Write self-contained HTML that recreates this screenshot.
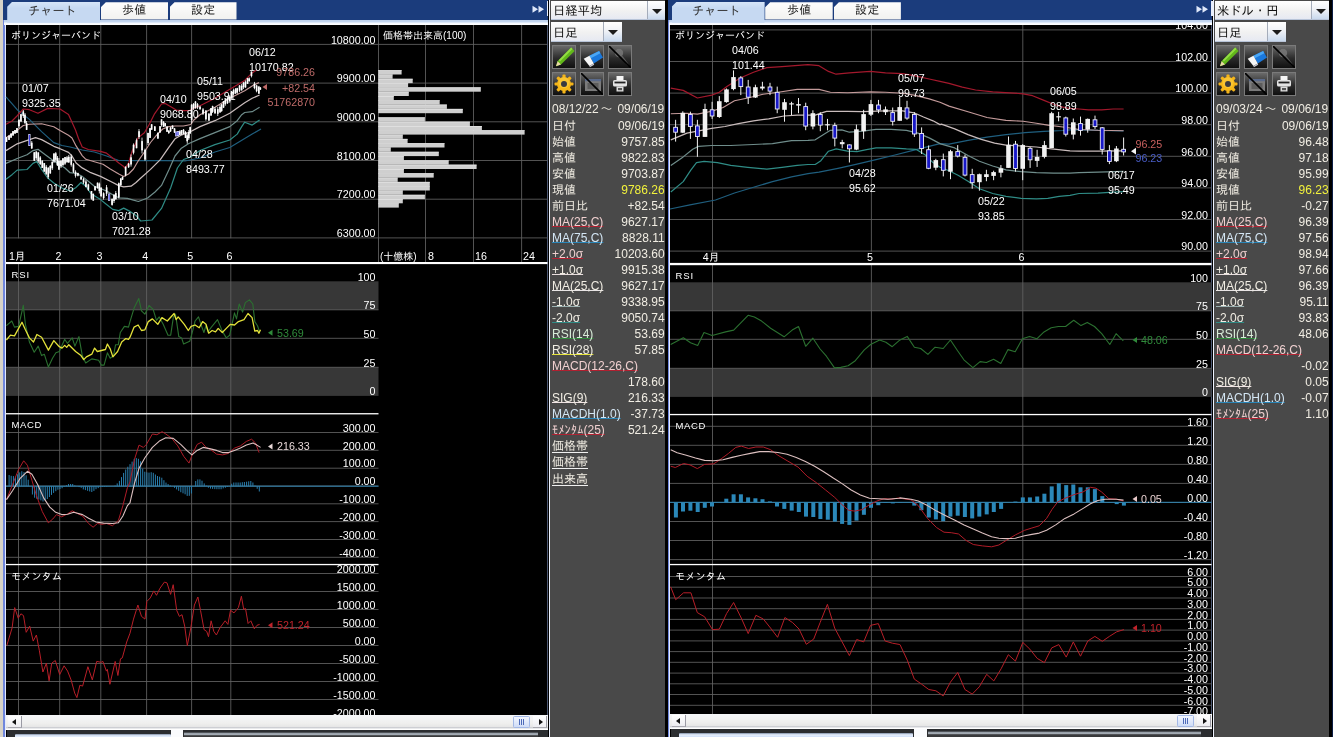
<!DOCTYPE html>
<html lang="ja"><head><meta charset="utf-8"><title>チャート</title>
<style>
html,body{margin:0;padding:0;background:#000;}
#root{position:relative;width:1333px;height:737px;overflow:hidden;background:#000;font-family:"Liberation Sans", "IPAGothic", "Noto Sans CJK JP", sans-serif;}
#root div,#root span{box-sizing:border-box}
.edge{position:absolute;top:0;height:737px}
.bar{position:absolute;top:0;height:20.4px;background:#1b3c7c}
.strip{position:absolute;top:20px;height:5.2px;background:linear-gradient(#bccfeb 0,#c6d9f2 40%,#f4f8ff 60%,#ffffff 100%)}
.tab{position:absolute;top:2.2px;height:17.4px;background:linear-gradient(#fdfdfd,#f1f1ef);text-align:center;font-size:12px;line-height:16px;color:#222;
  clip-path:polygon(5px 0,100% 0,100% 100%,0 100%,0 5px)}
.tab span{display:inline-block;letter-spacing:0.2px}
.tab.act{top:1.8px;height:21px;background:linear-gradient(#d6e5f8,#c6d9f2 30%);line-height:18px;color:#333;padding-right:3px}
.side{position:absolute;top:0;height:737px;background:#494949;}
.side .row,.dd span,.tab span{will-change:transform}
.dd{position:absolute;background:linear-gradient(#ffffff,#f1f1f1 55%,#e6e9f2);font-size:12px;color:#111;line-height:18px;border-bottom:1px solid #b8c4d8}
.ddt{position:absolute;left:1.5px;top:1.3px;white-space:nowrap;font-size:12.3px}
.ddb{position:absolute;right:0;top:0;bottom:0;border-left:1px solid #a4acba;background:linear-gradient(#ffffff,#eef1f6 50%,#c9d9ee)}
.ddb i{position:absolute;left:50%;top:8px;margin-left:-5px;border-left:5px solid transparent;border-right:5px solid transparent;border-top:5px solid #1c1c1c;width:0;height:0}
.ib{position:absolute;width:24px;height:24px;border:1px solid #7a7a7a;background:linear-gradient(#6a6a6a,#2c2c2c 55%,#101010);overflow:hidden}
.ib svg{position:absolute;left:0;top:0}
.row{position:absolute;left:2.3px;right:0.1px;height:16px;font-size:12px;line-height:15px;color:#f1ede3;white-space:nowrap}
.row .l{position:absolute;left:0;top:0;height:14.6px;line-height:15px}
.row .v{position:absolute;right:0;top:0}
.til{display:inline-block;width:15.4px;text-align:center;font-size:12px}
.hk{letter-spacing:0.3px;font-size:12px}
.sb{position:absolute;height:15.1px;background:linear-gradient(#f6f7f9,#efefee 55%,#e6e6e6 80%,#b9bcc4 86%,#ffffff 92%);}
.sbb{position:absolute;top:1.2px;width:14px;height:11.6px;background:linear-gradient(#ffffff,#ececf0);border-right:1px solid #9a9aa4;border-bottom:1px solid #a8a8b0}
.sbb i{position:absolute;top:2.6px;width:0;height:0;border-top:3.2px solid transparent;border-bottom:3.2px solid transparent}
.al{left:4px;border-right:4px solid #111}
.ar{left:6px;border-left:4px solid #111}
.sbt{position:absolute;top:1.2px;width:16.8px;height:11.6px;background:linear-gradient(#f2f6ff,#cfdcf6);border:1px solid #a3b8e6;border-radius:1.5px}
.sbt b{position:absolute;top:2.4px;width:1px;height:5.4px;background:#4d6ab8}
.sbt b:nth-child(1){left:4.6px}.sbt b:nth-child(2){left:6.8px}.sbt b:nth-child(3){left:9px}
.bs{position:absolute;height:9px;background:#2b2d30}
</style></head>
<body>
<div id="root">
<div class="edge" style="left:0;width:3.2px;background:#d7d3c8"></div>
<div class="edge" style="left:3.2px;width:1.4px;background:#6f86dc"></div>
<div class="edge" style="left:4.6px;width:1.6px;background:#e2e9fc"></div>
<div class="edge" style="left:547.3px;width:1.2px;background:#9bb2ea"></div>
<div class="edge" style="left:548.5px;width:1.7px;background:#eef3ff"></div>
<div class="edge" style="left:667.6px;width:1.2px;background:#6f86dc"></div>
<div class="edge" style="left:668.8px;width:1.4px;background:#e2e9fc"></div>
<div class="edge" style="left:1211.3px;width:1.2px;background:#9bb2ea"></div>
<div class="edge" style="left:1212.5px;width:1.7px;background:#eef3ff"></div>
<svg width="1333" height="737" viewBox="0 0 1333 737" style="position:absolute;left:0;top:0;will-change:transform" font-family='"Liberation Sans", "IPAGothic", "Noto Sans CJK JP", sans-serif'>
<rect x="6" y="25" width="541.5" height="690" fill="#000" />
<rect x="670" y="25" width="541.5" height="690" fill="#000" />
<rect x="6" y="281.3" width="372.5" height="28.5" fill="#373737" />
<rect x="6" y="367.3" width="372.5" height="28.6" fill="#373737" />
<rect x="670" y="282.3" width="541.5" height="28.5" fill="#373737" />
<rect x="670" y="368.3" width="541.5" height="28.6" fill="#373737" />
<line x1="18.5" y1="25" x2="18.5" y2="238.3" stroke="#626262" stroke-width="0.85"/>
<line x1="18.5" y1="264" x2="18.5" y2="715" stroke="#626262" stroke-width="0.85"/>
<line x1="59.7" y1="25" x2="59.7" y2="238.3" stroke="#626262" stroke-width="0.85"/>
<line x1="59.7" y1="264" x2="59.7" y2="715" stroke="#626262" stroke-width="0.85"/>
<line x1="100.8" y1="25" x2="100.8" y2="238.3" stroke="#626262" stroke-width="0.85"/>
<line x1="100.8" y1="264" x2="100.8" y2="715" stroke="#626262" stroke-width="0.85"/>
<line x1="146.6" y1="25" x2="146.6" y2="238.3" stroke="#626262" stroke-width="0.85"/>
<line x1="146.6" y1="264" x2="146.6" y2="715" stroke="#626262" stroke-width="0.85"/>
<line x1="191.6" y1="25" x2="191.6" y2="238.3" stroke="#626262" stroke-width="0.85"/>
<line x1="191.6" y1="264" x2="191.6" y2="715" stroke="#626262" stroke-width="0.85"/>
<line x1="230.8" y1="25" x2="230.8" y2="238.3" stroke="#626262" stroke-width="0.85"/>
<line x1="230.8" y1="264" x2="230.8" y2="715" stroke="#626262" stroke-width="0.85"/>
<line x1="378.5" y1="25" x2="378.5" y2="262" stroke="#626262" stroke-width="0.85"/>
<line x1="425.5" y1="25" x2="425.5" y2="262" stroke="#626262" stroke-width="0.85"/>
<line x1="473.5" y1="25" x2="473.5" y2="262" stroke="#626262" stroke-width="0.85"/>
<line x1="521.6" y1="25" x2="521.6" y2="262" stroke="#626262" stroke-width="0.85"/>
<line x1="6" y1="44.4" x2="547.5" y2="44.4" stroke="#626262" stroke-width="0.85"/>
<line x1="6" y1="83.1" x2="547.5" y2="83.1" stroke="#626262" stroke-width="0.85"/>
<line x1="6" y1="121.8" x2="547.5" y2="121.8" stroke="#626262" stroke-width="0.85"/>
<line x1="6" y1="160.5" x2="547.5" y2="160.5" stroke="#626262" stroke-width="0.85"/>
<line x1="6" y1="199.2" x2="547.5" y2="199.2" stroke="#626262" stroke-width="0.85"/>
<line x1="6" y1="237.9" x2="547.5" y2="237.9" stroke="#626262" stroke-width="0.85"/>
<line x1="6" y1="309.8" x2="378.5" y2="309.8" stroke="#626262" stroke-width="0.85"/>
<line x1="6" y1="338.3" x2="378.5" y2="338.3" stroke="#626262" stroke-width="0.85"/>
<line x1="6" y1="367.3" x2="378.5" y2="367.3" stroke="#626262" stroke-width="0.85"/>
<line x1="6" y1="432.5" x2="378.5" y2="432.5" stroke="#626262" stroke-width="0.85"/>
<line x1="6" y1="450.3" x2="378.5" y2="450.3" stroke="#626262" stroke-width="0.85"/>
<line x1="6" y1="468.2" x2="378.5" y2="468.2" stroke="#626262" stroke-width="0.85"/>
<line x1="6" y1="486" x2="378.5" y2="486" stroke="#626262" stroke-width="0.85"/>
<line x1="6" y1="503.8" x2="378.5" y2="503.8" stroke="#626262" stroke-width="0.85"/>
<line x1="6" y1="521.6" x2="378.5" y2="521.6" stroke="#626262" stroke-width="0.85"/>
<line x1="6" y1="539.5" x2="378.5" y2="539.5" stroke="#626262" stroke-width="0.85"/>
<line x1="6" y1="557.3" x2="378.5" y2="557.3" stroke="#626262" stroke-width="0.85"/>
<line x1="6" y1="573.5" x2="378.5" y2="573.5" stroke="#626262" stroke-width="0.85"/>
<line x1="6" y1="591.5" x2="378.5" y2="591.5" stroke="#626262" stroke-width="0.85"/>
<line x1="6" y1="609.5" x2="378.5" y2="609.5" stroke="#626262" stroke-width="0.85"/>
<line x1="6" y1="627.5" x2="378.5" y2="627.5" stroke="#626262" stroke-width="0.85"/>
<line x1="6" y1="645.5" x2="378.5" y2="645.5" stroke="#626262" stroke-width="0.85"/>
<line x1="6" y1="663.5" x2="378.5" y2="663.5" stroke="#626262" stroke-width="0.85"/>
<line x1="6" y1="681.5" x2="378.5" y2="681.5" stroke="#626262" stroke-width="0.85"/>
<line x1="6" y1="699.5" x2="378.5" y2="699.5" stroke="#626262" stroke-width="0.85"/>
<line x1="712.5" y1="25" x2="712.5" y2="251.5" stroke="#626262" stroke-width="0.85"/>
<line x1="712.5" y1="265" x2="712.5" y2="715" stroke="#626262" stroke-width="0.85"/>
<line x1="871.4" y1="25" x2="871.4" y2="251.5" stroke="#626262" stroke-width="0.85"/>
<line x1="871.4" y1="265" x2="871.4" y2="715" stroke="#626262" stroke-width="0.85"/>
<line x1="1022.8" y1="25" x2="1022.8" y2="251.5" stroke="#626262" stroke-width="0.85"/>
<line x1="1022.8" y1="265" x2="1022.8" y2="715" stroke="#626262" stroke-width="0.85"/>
<line x1="670" y1="29.9" x2="1211.5" y2="29.9" stroke="#626262" stroke-width="0.85"/>
<line x1="670" y1="61.5" x2="1211.5" y2="61.5" stroke="#626262" stroke-width="0.85"/>
<line x1="670" y1="93.1" x2="1211.5" y2="93.1" stroke="#626262" stroke-width="0.85"/>
<line x1="670" y1="124.7" x2="1211.5" y2="124.7" stroke="#626262" stroke-width="0.85"/>
<line x1="670" y1="156.3" x2="1211.5" y2="156.3" stroke="#626262" stroke-width="0.85"/>
<line x1="670" y1="187.9" x2="1211.5" y2="187.9" stroke="#626262" stroke-width="0.85"/>
<line x1="670" y1="219.5" x2="1211.5" y2="219.5" stroke="#626262" stroke-width="0.85"/>
<line x1="670" y1="251.1" x2="1211.5" y2="251.1" stroke="#626262" stroke-width="0.85"/>
<line x1="670" y1="310.8" x2="1211.5" y2="310.8" stroke="#626262" stroke-width="0.85"/>
<line x1="670" y1="339.3" x2="1211.5" y2="339.3" stroke="#626262" stroke-width="0.85"/>
<line x1="670" y1="368.3" x2="1211.5" y2="368.3" stroke="#626262" stroke-width="0.85"/>
<line x1="670" y1="426.3" x2="1211.5" y2="426.3" stroke="#626262" stroke-width="0.85"/>
<line x1="670" y1="445.3" x2="1211.5" y2="445.3" stroke="#626262" stroke-width="0.85"/>
<line x1="670" y1="464.4" x2="1211.5" y2="464.4" stroke="#626262" stroke-width="0.85"/>
<line x1="670" y1="483.4" x2="1211.5" y2="483.4" stroke="#626262" stroke-width="0.85"/>
<line x1="670" y1="502.5" x2="1211.5" y2="502.5" stroke="#626262" stroke-width="0.85"/>
<line x1="670" y1="521.5" x2="1211.5" y2="521.5" stroke="#626262" stroke-width="0.85"/>
<line x1="670" y1="540.5" x2="1211.5" y2="540.5" stroke="#626262" stroke-width="0.85"/>
<line x1="670" y1="559.6" x2="1211.5" y2="559.6" stroke="#626262" stroke-width="0.85"/>
<line x1="670" y1="576.5" x2="1211.5" y2="576.5" stroke="#626262" stroke-width="0.85"/>
<line x1="670" y1="587.2" x2="1211.5" y2="587.2" stroke="#626262" stroke-width="0.85"/>
<line x1="670" y1="598" x2="1211.5" y2="598" stroke="#626262" stroke-width="0.85"/>
<line x1="670" y1="608.7" x2="1211.5" y2="608.7" stroke="#626262" stroke-width="0.85"/>
<line x1="670" y1="619.4" x2="1211.5" y2="619.4" stroke="#626262" stroke-width="0.85"/>
<line x1="670" y1="630.1" x2="1211.5" y2="630.1" stroke="#626262" stroke-width="0.85"/>
<line x1="670" y1="640.9" x2="1211.5" y2="640.9" stroke="#626262" stroke-width="0.85"/>
<line x1="670" y1="651.6" x2="1211.5" y2="651.6" stroke="#626262" stroke-width="0.85"/>
<line x1="670" y1="662.3" x2="1211.5" y2="662.3" stroke="#626262" stroke-width="0.85"/>
<line x1="670" y1="673.1" x2="1211.5" y2="673.1" stroke="#626262" stroke-width="0.85"/>
<line x1="670" y1="683.8" x2="1211.5" y2="683.8" stroke="#626262" stroke-width="0.85"/>
<line x1="670" y1="694.5" x2="1211.5" y2="694.5" stroke="#626262" stroke-width="0.85"/>
<line x1="670" y1="705.3" x2="1211.5" y2="705.3" stroke="#626262" stroke-width="0.85"/>
<line x1="670" y1="716" x2="1211.5" y2="716" stroke="#626262" stroke-width="0.85"/>
<rect x="378.2" y="70.2" width="23.4" height="4.3" fill="#cfcfcf" />
<rect x="378.2" y="70.2" width="23.4" height="0.7" fill="#e6e6e6" />
<rect x="378.2" y="74.5" width="14.4" height="4.3" fill="#cfcfcf" />
<rect x="378.2" y="74.5" width="14.4" height="0.7" fill="#e6e6e6" />
<rect x="378.2" y="78.8" width="34.5" height="4.3" fill="#cfcfcf" />
<rect x="378.2" y="78.8" width="34.5" height="0.7" fill="#e6e6e6" />
<rect x="378.2" y="83.1" width="29.9" height="4.3" fill="#cfcfcf" />
<rect x="378.2" y="83.1" width="29.9" height="0.7" fill="#e6e6e6" />
<rect x="378.2" y="87.4" width="102.6" height="4.3" fill="#cfcfcf" />
<rect x="378.2" y="87.4" width="102.6" height="0.7" fill="#e6e6e6" />
<rect x="378.2" y="91.7" width="30.6" height="4.3" fill="#cfcfcf" />
<rect x="378.2" y="91.7" width="30.6" height="0.7" fill="#e6e6e6" />
<rect x="378.2" y="96" width="15.6" height="4.3" fill="#cfcfcf" />
<rect x="378.2" y="96" width="15.6" height="0.7" fill="#e6e6e6" />
<rect x="378.2" y="100.3" width="61.5" height="4.3" fill="#cfcfcf" />
<rect x="378.2" y="100.3" width="61.5" height="0.7" fill="#e6e6e6" />
<rect x="378.2" y="104.6" width="68.7" height="4.3" fill="#cfcfcf" />
<rect x="378.2" y="104.6" width="68.7" height="0.7" fill="#e6e6e6" />
<rect x="378.2" y="108.9" width="84.6" height="4.3" fill="#cfcfcf" />
<rect x="378.2" y="108.9" width="84.6" height="0.7" fill="#e6e6e6" />
<rect x="378.2" y="117.4" width="46.7" height="4.3" fill="#cfcfcf" />
<rect x="378.2" y="117.4" width="46.7" height="0.7" fill="#e6e6e6" />
<rect x="378.2" y="121.7" width="91.7" height="4.3" fill="#cfcfcf" />
<rect x="378.2" y="121.7" width="91.7" height="0.7" fill="#e6e6e6" />
<rect x="378.2" y="126" width="103.7" height="4.3" fill="#cfcfcf" />
<rect x="378.2" y="126" width="103.7" height="0.7" fill="#e6e6e6" />
<rect x="378.2" y="130.3" width="146.4" height="4.3" fill="#cfcfcf" />
<rect x="378.2" y="130.3" width="146.4" height="0.7" fill="#e6e6e6" />
<rect x="378.2" y="134.6" width="24.6" height="4.3" fill="#cfcfcf" />
<rect x="378.2" y="134.6" width="24.6" height="0.7" fill="#e6e6e6" />
<rect x="378.2" y="138.9" width="29.4" height="4.3" fill="#cfcfcf" />
<rect x="378.2" y="138.9" width="29.4" height="0.7" fill="#e6e6e6" />
<rect x="378.2" y="143.2" width="66.3" height="4.3" fill="#cfcfcf" />
<rect x="378.2" y="143.2" width="66.3" height="0.7" fill="#e6e6e6" />
<rect x="378.2" y="147.5" width="12.6" height="4.3" fill="#cfcfcf" />
<rect x="378.2" y="147.5" width="12.6" height="0.7" fill="#e6e6e6" />
<rect x="378.2" y="151.8" width="60.6" height="4.3" fill="#cfcfcf" />
<rect x="378.2" y="151.8" width="60.6" height="0.7" fill="#e6e6e6" />
<rect x="378.2" y="156.1" width="25.7" height="4.3" fill="#cfcfcf" />
<rect x="378.2" y="156.1" width="25.7" height="0.7" fill="#e6e6e6" />
<rect x="378.2" y="160.4" width="70.5" height="4.3" fill="#cfcfcf" />
<rect x="378.2" y="160.4" width="70.5" height="0.7" fill="#e6e6e6" />
<rect x="378.2" y="164.7" width="98.4" height="4.3" fill="#cfcfcf" />
<rect x="378.2" y="164.7" width="98.4" height="0.7" fill="#e6e6e6" />
<rect x="378.2" y="169" width="25.7" height="4.3" fill="#cfcfcf" />
<rect x="378.2" y="169" width="25.7" height="0.7" fill="#e6e6e6" />
<rect x="378.2" y="173.3" width="55.5" height="4.3" fill="#cfcfcf" />
<rect x="378.2" y="173.3" width="55.5" height="0.7" fill="#e6e6e6" />
<rect x="378.2" y="177.6" width="19.5" height="4.3" fill="#cfcfcf" />
<rect x="378.2" y="177.6" width="19.5" height="0.7" fill="#e6e6e6" />
<rect x="378.2" y="181.9" width="51.6" height="4.3" fill="#cfcfcf" />
<rect x="378.2" y="181.9" width="51.6" height="0.7" fill="#e6e6e6" />
<rect x="378.2" y="186.2" width="51.6" height="4.3" fill="#cfcfcf" />
<rect x="378.2" y="186.2" width="51.6" height="0.7" fill="#e6e6e6" />
<rect x="378.2" y="190.5" width="24.6" height="4.3" fill="#cfcfcf" />
<rect x="378.2" y="190.5" width="24.6" height="0.7" fill="#e6e6e6" />
<rect x="378.2" y="194.8" width="46.7" height="4.3" fill="#cfcfcf" />
<rect x="378.2" y="194.8" width="46.7" height="0.7" fill="#e6e6e6" />
<rect x="378.2" y="199" width="24.6" height="4.3" fill="#cfcfcf" />
<rect x="378.2" y="199" width="24.6" height="0.7" fill="#e6e6e6" />
<rect x="378.2" y="203.3" width="20.6" height="4.3" fill="#cfcfcf" />
<rect x="378.2" y="203.3" width="20.6" height="0.7" fill="#e6e6e6" />
<polyline points="6,96.8 17.2,109.7 29.4,119.4 41.6,131.6 53.8,142.6 62,145.5 70,147 82.2,150 94.4,152 106.6,156 118.8,160.5 140,160.6 165,160.6 185,161 200,158 214.9,152 229.8,147.5 244.7,138.6 252.2,134.1 261,128.9" fill="none" stroke="#1f5e7e" stroke-width="1.2" stroke-linejoin="round" />
<polyline points="6,179.2 12.3,174.4 17.2,170.1 27,169.5 33,163.4 36.7,161.5 41.6,169.5 47.7,178 53.8,183 62,188 70,191 76.1,187.4 81,182.5 85.9,186.2 90.8,193.5 100.5,199.6 106.6,204.5 112.7,209.4 118.8,210.6 123.7,208.1 128.6,210.6 136,215.5 140.7,221 152,220 161.5,208.4 170.7,187.7 177.4,168 183.5,159.5 190,157.2 200,150.5 214.9,144.6 229.8,140 237.2,134.1 241.7,126.6 244.7,122.2 252.2,125.1 259.6,119.9" fill="none" stroke="#2f8c86" stroke-width="1.2" stroke-linejoin="round" />
<polyline points="6,163.4 17.2,158.5 27,154.8 33,150.6 38,149.3 45.3,154.8 53.8,161 65,168 70,172.7 76.1,173.3 82.2,176.4 88.3,181.3 94.4,186.2 100.5,188.6 106.6,191 112.7,194.7 118.8,197.8 127.4,198.4 133.5,200.2 138.4,201.5 147.6,198 155,192 161.5,185.4 168.8,170 175,156 181,148.6 188.4,143.7 200,138.6 214.9,132.6 229.8,126.6 237.2,120.7 241.7,114.7 244.7,112.5 252.2,111.7 259.6,107.2" fill="none" stroke="#6f8d8b" stroke-width="1.2" stroke-linejoin="round" />
<polyline points="6,150.6 17.2,143.8 25.8,140.8 35.5,137.7 41.6,139.6 53.8,146.3 60,148.7 68.5,152.4 72,156 76.1,163 82.2,167.9 90.8,172.7 100.5,176.4 110.3,181.3 118.8,185.6 123.7,186.8 131,186.2 136,182.5 140,178.8 150.5,169.4 160.3,159.6 168.8,147.4 175,138.8 181,135.2 188.4,132.7 200,126.6 214.9,120.7 229.8,113.2 244.7,102.8 252.2,98.3 259.6,95" fill="none" stroke="#c9bcbc" stroke-width="1.25" stroke-linejoin="round" />
<polyline points="6,137.7 17.2,130.4 23.3,125.5 29.4,124.3 41.6,123.7 53.8,126.7 60,130.4 68.5,135.3 72,138 76.1,145.9 82.2,155.6 85.9,159.3 94.4,161.7 103,164.2 110.3,169 118.8,174 123.7,176.4 128.6,174 133.5,169 138.3,160.8 144.4,152 150.5,142.5 156.6,135.2 162.7,129 168.8,126.6 175,126 183.5,126 190.8,124.5 193.3,120.5 200,114.7 214.9,107.2 229.8,98.3 244.7,90.8 253.7,84.9 259,82.6" fill="none" stroke="#c39a9a" stroke-width="1.15" stroke-linejoin="round" />
<polyline points="6,124.3 12,121 17,116 23.3,109 29.4,109.7 38,113.3 47.7,108.4 60,109 68.5,114.5 75.5,130 78.5,138.5 82.2,147 88.3,149.5 100.5,151.4 106.6,153.2 112.7,158 118.8,163 123.7,166.6 124.9,168.1 128.5,163.3 132.2,151 138.3,137.6 144.4,132.7 149.3,124.2 154.2,114.4 161.5,104 165.2,103.4 171.3,107.1 176.2,110.1 184,110.6 190,110.3 193.3,108.3 200,105.7 214.9,98.3 229.8,89.3 244.7,80.4 252.2,72.9 256.6,69.9" fill="none" stroke="#a3182c" stroke-width="1.2" stroke-linejoin="round" />
<rect x="5.7" y="137.4" width="1.7" height="4.4" fill="#fff" />
<rect x="6.1" y="137" width="0.8" height="5" fill="#fff" />
<rect x="8.2" y="135.8" width="1.7" height="4.1" fill="#fff" />
<rect x="8.6" y="135" width="0.8" height="5" fill="#fff" />
<rect x="10.2" y="133.7" width="1.7" height="3.9" fill="#fff" />
<rect x="10.6" y="133" width="0.8" height="5" fill="#fff" />
<rect x="12.2" y="131.1" width="1.7" height="4.3" fill="#fff" />
<rect x="12.6" y="131" width="0.8" height="5" fill="#fff" />
<rect x="14.2" y="130" width="1.7" height="3.5" fill="#fff" />
<rect x="14.6" y="130" width="0.8" height="4" fill="#fff" />
<rect x="16.1" y="128.1" width="1.7" height="4.8" fill="#fff" />
<rect x="16.6" y="128" width="0.8" height="5" fill="#fff" />
<rect x="18.1" y="120" width="1.7" height="6.2" fill="#fff" />
<rect x="18.6" y="119" width="0.8" height="9" fill="#fff" />
<rect x="20.1" y="114.2" width="1.7" height="7.3" fill="#fff" />
<rect x="20.6" y="114" width="0.8" height="8" fill="#fff" />
<rect x="22.4" y="111.3" width="1.7" height="4.8" fill="#fff" />
<rect x="22.9" y="110" width="0.8" height="8" fill="#fff" />
<rect x="24.1" y="114.6" width="1.7" height="8.3" fill="#fff" />
<rect x="24.6" y="113" width="0.8" height="11" fill="#fff" />
<rect x="25.8" y="123.2" width="1.7" height="6.7" fill="#fff" />
<rect x="26.2" y="121" width="0.8" height="9" fill="#fff" />
<rect x="28.3" y="134" width="2.2" height="12" fill="#e4e4ff" />
<rect x="28.9" y="134.7" width="1" height="10.6" fill="#2828d8" />
<rect x="30.9" y="142.7" width="1.7" height="5.7" fill="#fff" />
<rect x="31.4" y="141" width="0.8" height="8" fill="#fff" />
<rect x="33.4" y="152.3" width="1.7" height="8.4" fill="#fff" />
<rect x="33.9" y="152" width="0.8" height="9" fill="#fff" />
<rect x="35.4" y="151.7" width="1.7" height="6.5" fill="#fff" />
<rect x="35.8" y="151" width="0.8" height="9" fill="#fff" />
<rect x="37.4" y="152.5" width="1.7" height="8.9" fill="#fff" />
<rect x="37.8" y="152" width="0.8" height="11" fill="#fff" />
<rect x="39.4" y="157.4" width="1.7" height="6.7" fill="#fff" />
<rect x="39.8" y="156" width="0.8" height="9" fill="#fff" />
<rect x="41.4" y="161.1" width="1.7" height="6.8" fill="#fff" />
<rect x="41.8" y="160" width="0.8" height="8" fill="#fff" />
<rect x="43.4" y="163.1" width="1.7" height="8.4" fill="#fff" />
<rect x="43.8" y="163" width="0.8" height="9" fill="#fff" />
<rect x="45.4" y="166.7" width="1.7" height="7.2" fill="#fff" />
<rect x="45.8" y="165" width="0.8" height="10" fill="#fff" />
<rect x="47.4" y="167.9" width="1.7" height="9.3" fill="#fff" />
<rect x="47.8" y="167" width="0.8" height="12" fill="#fff" />
<rect x="49.4" y="166" width="1.7" height="7.3" fill="#fff" />
<rect x="49.8" y="165" width="0.8" height="9" fill="#fff" />
<rect x="51.4" y="162" width="1.7" height="6.3" fill="#fff" />
<rect x="51.8" y="160" width="0.8" height="10" fill="#fff" />
<rect x="53.1" y="153.6" width="1.7" height="8" fill="#fff" />
<rect x="53.6" y="153" width="0.8" height="10" fill="#fff" />
<rect x="54.9" y="153.3" width="1.7" height="6.5" fill="#fff" />
<rect x="55.4" y="152" width="0.8" height="10" fill="#fff" />
<rect x="56.5" y="157.8" width="1.7" height="7.5" fill="#fff" />
<rect x="57" y="156" width="0.8" height="10" fill="#fff" />
<rect x="58.1" y="160.9" width="1.7" height="8.7" fill="#fff" />
<rect x="58.6" y="158" width="0.8" height="12" fill="#fff" />
<rect x="60.1" y="160.8" width="1.7" height="5.6" fill="#fff" />
<rect x="60.6" y="160" width="0.8" height="8" fill="#fff" />
<rect x="62.1" y="158.3" width="1.7" height="6.7" fill="#fff" />
<rect x="62.6" y="158" width="0.8" height="8" fill="#fff" />
<rect x="64.2" y="157.1" width="1.7" height="6.6" fill="#fff" />
<rect x="64.6" y="157" width="0.8" height="8" fill="#fff" />
<rect x="66.2" y="157.3" width="1.7" height="4.7" fill="#fff" />
<rect x="66.6" y="156" width="0.8" height="7" fill="#fff" />
<rect x="68" y="156.8" width="1.7" height="5.6" fill="#fff" />
<rect x="68.4" y="155" width="0.8" height="8" fill="#fff" />
<rect x="70.4" y="156.5" width="1.7" height="8.3" fill="#fff" />
<rect x="70.8" y="154.4" width="0.8" height="12.2" fill="#fff" />
<rect x="72.6" y="164.4" width="1.7" height="7.4" fill="#fff" />
<rect x="73" y="163" width="0.8" height="10" fill="#fff" />
<rect x="74.7" y="171.8" width="1.7" height="4" fill="#fff" />
<rect x="75.1" y="170.3" width="0.8" height="7.3" fill="#fff" />
<rect x="77.1" y="173.1" width="1.7" height="2.6" fill="#fff" />
<rect x="77.5" y="172.7" width="0.8" height="3.7" fill="#fff" />
<rect x="80.2" y="176.5" width="1.7" height="2.9" fill="#fff" />
<rect x="80.6" y="176.4" width="0.8" height="3.6" fill="#fff" />
<rect x="82.7" y="179" width="1.7" height="3.5" fill="#fff" />
<rect x="83.1" y="178" width="0.8" height="6" fill="#fff" />
<rect x="85.1" y="181.5" width="1.7" height="5.4" fill="#fff" />
<rect x="85.5" y="180" width="0.8" height="7.4" fill="#fff" />
<rect x="87.5" y="184.4" width="1.7" height="5.4" fill="#fff" />
<rect x="87.9" y="183.7" width="0.8" height="7.3" fill="#fff" />
<rect x="90.6" y="191" width="1.7" height="7.6" fill="#fff" />
<rect x="91" y="191" width="0.8" height="8.6" fill="#fff" />
<rect x="92.4" y="193.8" width="1.7" height="6.8" fill="#fff" />
<rect x="92.8" y="193.5" width="0.8" height="7.3" fill="#fff" />
<rect x="94.2" y="186.3" width="1.7" height="3.8" fill="#fff" />
<rect x="94.6" y="186.2" width="0.8" height="4.8" fill="#fff" />
<rect x="96.7" y="182.7" width="1.7" height="5.5" fill="#fff" />
<rect x="97.1" y="182.5" width="0.8" height="6.1" fill="#fff" />
<rect x="98.5" y="183.6" width="1.7" height="7.5" fill="#fff" />
<rect x="98.9" y="182.5" width="0.8" height="11" fill="#fff" />
<rect x="100.2" y="187.6" width="1.7" height="8.5" fill="#fff" />
<rect x="100.7" y="187.4" width="0.8" height="9.8" fill="#fff" />
<rect x="102.8" y="193.3" width="1.7" height="4.7" fill="#fff" />
<rect x="103.2" y="192.3" width="0.8" height="7.3" fill="#fff" />
<rect x="105.8" y="187.3" width="1.7" height="6.4" fill="#fff" />
<rect x="106.2" y="185" width="0.8" height="11" fill="#fff" />
<rect x="108" y="193.5" width="2.2" height="7.3" fill="#e4e4ff" />
<rect x="108.6" y="194.2" width="1" height="5.9" fill="#2828d8" />
<rect x="111.2" y="198.9" width="1.7" height="6" fill="#fff" />
<rect x="111.7" y="198.4" width="0.8" height="7.3" fill="#fff" />
<rect x="113.2" y="194.8" width="1.7" height="6.2" fill="#fff" />
<rect x="113.6" y="194" width="0.8" height="9" fill="#fff" />
<rect x="115" y="193.1" width="1.7" height="6.2" fill="#fff" />
<rect x="115.4" y="191" width="0.8" height="8.6" fill="#fff" />
<rect x="118" y="183.2" width="1.7" height="14.3" fill="#fff" />
<rect x="118.4" y="182.5" width="0.8" height="15.9" fill="#fff" />
<rect x="120" y="178.5" width="1.7" height="6.6" fill="#fff" />
<rect x="120.4" y="178" width="0.8" height="8" fill="#fff" />
<rect x="121.7" y="176.9" width="1.7" height="2.8" fill="#fff" />
<rect x="122.1" y="176.4" width="0.8" height="3.6" fill="#fff" />
<rect x="124.8" y="166.6" width="1.7" height="8.8" fill="#fff" />
<rect x="125.2" y="166.6" width="0.8" height="9.8" fill="#fff" />
<rect x="127.8" y="163.5" width="1.7" height="3.8" fill="#fff" />
<rect x="128.2" y="163" width="0.8" height="4.9" fill="#fff" />
<rect x="130.2" y="157.3" width="1.7" height="7.2" fill="#fff" />
<rect x="130.6" y="154.4" width="0.8" height="12.2" fill="#fff" />
<rect x="132.7" y="144.8" width="1.7" height="7.9" fill="#fff" />
<rect x="133.1" y="143.4" width="0.8" height="11" fill="#fff" />
<rect x="135.7" y="140.2" width="1.7" height="8" fill="#fff" />
<rect x="136.1" y="138.5" width="0.8" height="9.8" fill="#fff" />
<rect x="138.2" y="131.2" width="1.7" height="5.8" fill="#fff" />
<rect x="138.6" y="129" width="0.8" height="10" fill="#fff" />
<rect x="141.2" y="141.1" width="1.7" height="9.3" fill="#fff" />
<rect x="141.6" y="137.6" width="0.8" height="15.9" fill="#fff" />
<rect x="144.2" y="149.8" width="1.7" height="9.8" fill="#fff" />
<rect x="144.6" y="148.6" width="0.8" height="12.2" fill="#fff" />
<rect x="147.2" y="133" width="1.7" height="10" fill="#fff" />
<rect x="147.6" y="132.7" width="0.8" height="12.3" fill="#fff" />
<rect x="149.2" y="128.2" width="1.7" height="9.7" fill="#fff" />
<rect x="149.6" y="128" width="0.8" height="10" fill="#fff" />
<rect x="150.8" y="124.3" width="1.7" height="5.4" fill="#fff" />
<rect x="151.3" y="124" width="0.8" height="6" fill="#fff" />
<rect x="154" y="126.4" width="1.7" height="4.5" fill="#fff" />
<rect x="154.4" y="126" width="0.8" height="5" fill="#fff" />
<rect x="157.1" y="132.7" width="1.7" height="5.9" fill="#fff" />
<rect x="157.5" y="132.7" width="0.8" height="6.1" fill="#fff" />
<rect x="159.2" y="126.2" width="1.7" height="6.2" fill="#fff" />
<rect x="159.6" y="126" width="0.8" height="7" fill="#fff" />
<rect x="160.7" y="119.3" width="1.7" height="5.7" fill="#fff" />
<rect x="161.1" y="119.3" width="0.8" height="7.3" fill="#fff" />
<rect x="162.7" y="121.9" width="1.7" height="4.9" fill="#fff" />
<rect x="163.1" y="121" width="0.8" height="6" fill="#fff" />
<rect x="164.3" y="123.2" width="1.7" height="3.1" fill="#fff" />
<rect x="164.8" y="123" width="0.8" height="3.6" fill="#fff" />
<rect x="166.2" y="126.5" width="1.7" height="5.3" fill="#fff" />
<rect x="166.6" y="126" width="0.8" height="6" fill="#fff" />
<rect x="168" y="130.8" width="1.7" height="2.2" fill="#fff" />
<rect x="168.4" y="130" width="0.8" height="4" fill="#fff" />
<rect x="169.7" y="127.6" width="1.7" height="3.8" fill="#fff" />
<rect x="170.1" y="127" width="0.8" height="5" fill="#fff" />
<rect x="171.7" y="125.5" width="1.7" height="3.4" fill="#fff" />
<rect x="172.1" y="125.4" width="0.8" height="3.6" fill="#fff" />
<rect x="173.7" y="128.4" width="1.7" height="4.2" fill="#fff" />
<rect x="174.1" y="128" width="0.8" height="5" fill="#fff" />
<rect x="175.1" y="131.5" width="2.2" height="4.9" fill="#e4e4ff" />
<rect x="175.7" y="132.2" width="1" height="3.5" fill="#2828d8" />
<rect x="176.9" y="131" width="2.2" height="5" fill="#e4e4ff" />
<rect x="177.5" y="131.7" width="1" height="3.6" fill="#2828d8" />
<rect x="179" y="131.3" width="1.7" height="3.7" fill="#fff" />
<rect x="179.4" y="130.3" width="0.8" height="4.9" fill="#fff" />
<rect x="180.7" y="130" width="1.7" height="3.8" fill="#fff" />
<rect x="181.1" y="130" width="0.8" height="5" fill="#fff" />
<rect x="182.7" y="129.7" width="1.7" height="4.2" fill="#fff" />
<rect x="183.1" y="129" width="0.8" height="5" fill="#fff" />
<rect x="184.7" y="132" width="1.7" height="6" fill="#fff" />
<rect x="185.1" y="131" width="0.8" height="7" fill="#fff" />
<rect x="186.3" y="135.3" width="1.7" height="6" fill="#fff" />
<rect x="186.8" y="134" width="0.8" height="9.7" fill="#fff" />
<rect x="188" y="132.2" width="1.7" height="6.1" fill="#fff" />
<rect x="188.4" y="130" width="0.8" height="10" fill="#fff" />
<rect x="189.3" y="127.1" width="1.7" height="6.2" fill="#fff" />
<rect x="189.8" y="126.6" width="0.8" height="7.4" fill="#fff" />
<rect x="190.8" y="104.8" width="1.7" height="15.1" fill="#fff" />
<rect x="191.3" y="104" width="0.8" height="19.7" fill="#fff" />
<rect x="192.7" y="103.9" width="1.7" height="4.7" fill="#fff" />
<rect x="193.1" y="103" width="0.8" height="7" fill="#fff" />
<rect x="194.6" y="101.6" width="1.7" height="6.6" fill="#fff" />
<rect x="195" y="101" width="0.8" height="7.7" fill="#fff" />
<rect x="196.7" y="104.2" width="1.7" height="3.3" fill="#fff" />
<rect x="197.1" y="103" width="0.8" height="6" fill="#fff" />
<rect x="199.2" y="106.6" width="1.7" height="2.5" fill="#fff" />
<rect x="199.6" y="105.7" width="0.8" height="4.3" fill="#fff" />
<rect x="202.2" y="109.4" width="1.7" height="4.3" fill="#fff" />
<rect x="202.6" y="108" width="0.8" height="7" fill="#fff" />
<rect x="205.1" y="110.6" width="1.7" height="8.7" fill="#fff" />
<rect x="205.5" y="110" width="0.8" height="10.7" fill="#fff" />
<rect x="208.1" y="113.7" width="1.7" height="7" fill="#fff" />
<rect x="208.5" y="113" width="0.8" height="7.7" fill="#fff" />
<rect x="210.2" y="108.1" width="1.7" height="7.4" fill="#fff" />
<rect x="210.6" y="108" width="0.8" height="8" fill="#fff" />
<rect x="211.8" y="106.2" width="1.7" height="5.6" fill="#fff" />
<rect x="212.2" y="105.7" width="0.8" height="7.3" fill="#fff" />
<rect x="214.2" y="108.7" width="1.7" height="4.5" fill="#fff" />
<rect x="214.6" y="107" width="0.8" height="7" fill="#fff" />
<rect x="217" y="109.1" width="1.7" height="4.7" fill="#fff" />
<rect x="217.4" y="107" width="0.8" height="9" fill="#fff" />
<rect x="219.2" y="106.9" width="1.7" height="5.4" fill="#fff" />
<rect x="219.6" y="105" width="0.8" height="8" fill="#fff" />
<rect x="220.8" y="104.4" width="1.7" height="6.8" fill="#fff" />
<rect x="221.2" y="104" width="0.8" height="7.7" fill="#fff" />
<rect x="222.7" y="101.3" width="1.7" height="6.3" fill="#fff" />
<rect x="223.1" y="101" width="0.8" height="7" fill="#fff" />
<rect x="224.5" y="99.5" width="1.7" height="4.6" fill="#fff" />
<rect x="224.9" y="98.3" width="0.8" height="7.4" fill="#fff" />
<rect x="226.7" y="97.7" width="1.7" height="5.4" fill="#fff" />
<rect x="227.1" y="96" width="0.8" height="8" fill="#fff" />
<rect x="229" y="96.5" width="1.7" height="4.8" fill="#fff" />
<rect x="229.4" y="95.3" width="0.8" height="7.5" fill="#fff" />
<rect x="230.7" y="91.2" width="1.7" height="6.5" fill="#fff" />
<rect x="231.1" y="91" width="0.8" height="8" fill="#fff" />
<rect x="232.7" y="90.1" width="1.7" height="3.9" fill="#fff" />
<rect x="233.1" y="88.6" width="0.8" height="6.7" fill="#fff" />
<rect x="234.7" y="89.1" width="1.7" height="4.2" fill="#fff" />
<rect x="235.1" y="88" width="0.8" height="6" fill="#fff" />
<rect x="236.3" y="88.1" width="1.7" height="4.5" fill="#fff" />
<rect x="236.8" y="87.8" width="0.8" height="6" fill="#fff" />
<rect x="238.7" y="85.6" width="1.7" height="5" fill="#fff" />
<rect x="239.1" y="85" width="0.8" height="7" fill="#fff" />
<rect x="240.8" y="85.7" width="1.7" height="4.5" fill="#fff" />
<rect x="241.3" y="84" width="0.8" height="6.8" fill="#fff" />
<rect x="242.7" y="82.7" width="1.7" height="4.6" fill="#fff" />
<rect x="243.1" y="82" width="0.8" height="7" fill="#fff" />
<rect x="244.6" y="81.7" width="1.7" height="5.7" fill="#fff" />
<rect x="245" y="80.4" width="0.8" height="7.4" fill="#fff" />
<rect x="246.7" y="78.2" width="1.7" height="5.6" fill="#fff" />
<rect x="247.1" y="78" width="0.8" height="6" fill="#fff" />
<rect x="248.3" y="78.4" width="1.7" height="2.6" fill="#fff" />
<rect x="248.8" y="77.4" width="0.8" height="4.5" fill="#fff" />
<rect x="250.6" y="71.6" width="1.7" height="4.5" fill="#fff" />
<rect x="251" y="71.4" width="0.8" height="6" fill="#fff" />
<rect x="253.6" y="83.7" width="1.7" height="4.4" fill="#fff" />
<rect x="254" y="81.9" width="0.8" height="7.4" fill="#fff" />
<rect x="255.8" y="85.5" width="1.7" height="5.7" fill="#fff" />
<rect x="256.2" y="84.9" width="0.8" height="7.4" fill="#fff" />
<rect x="258" y="86.5" width="1.7" height="7.2" fill="#fff" />
<rect x="258.5" y="86.3" width="0.8" height="7.5" fill="#fff" />
<rect x="259.5" y="87.7" width="1.7" height="1.8" fill="#fff" />
<rect x="260" y="87" width="0.8" height="3" fill="#fff" />
<polyline points="6.4,325.7 11.8,321 14.5,327.1 18.6,326.4 23.3,305.4 25.4,324.3 29.4,342 34.2,352.2 38.2,346.1 41.6,355.6 44.3,354.2 48.4,367.1 52.5,358.3 55.9,352.8 59.3,351.5 64.7,339.3 67.4,343.3 72.2,337.9 74.9,346.1 78.9,336.6 82.3,355.6 85.7,363 91.8,358.9 98.6,360.3 101.3,365.1 104.1,365.1 107.4,352.8 110.2,358.3 113.5,355.6 115.6,344.7 118.3,344.7 120.3,332.5 124.4,326.4 128.5,327.1 130,321.6 134.1,308.1 138.8,298.6 141.5,310.8 144.9,314.2 149,305.4 153.1,309.4 156.5,320.3 159.2,316.9 163.2,324.3 168,335.2 170.7,335.2 173.4,316.9 175.5,314.2 178.8,336.6 181.6,337.9 183.6,344 189.7,341.3 192.4,331.8 195.1,321 198.5,316.9 201.9,327.1 203.9,332.5 206,325.7 208,331.8 211.4,327.1 217.5,319.6 222.3,331.1 226.3,337.9 229.7,335.2 234.5,312.8 236.5,318.9 239.2,304 242.6,312.1 245.3,302.6 249.4,299.9 252.8,304 254.8,321.6 257.5,325.7 259.6,331.8" fill="none" stroke="#2b7030" stroke-width="1.1" stroke-linejoin="round" />
<polyline points="6.4,340 10.4,335.2 14.5,335.9 18.6,328.4 22,322.3 25.4,329.8 29.4,337.9 33.5,342 36.9,334.5 41.6,337.2 48.4,350.1 53.8,340.6 59.3,346.7 62,348.1 64.7,345.4 66.7,347.4 68.8,344.7 75.6,351.5 81,355.6 83.7,359.6 86.4,356.9 91.8,354.2 94.6,348.1 97.3,351.5 105.4,349.5 107.4,344 110.2,348.8 112.9,356.9 117.6,351.5 121.7,342 125.8,338.6 128.5,339.3 130,337.2 134.1,327.1 138.1,325 141.5,330.5 144.9,329.8 148.3,321.6 152.4,318.9 157.8,324.3 161.9,317.6 167.3,321 174.1,313.5 176.1,319.6 178.2,316.9 184.3,324.3 188.3,330.5 191.1,326.4 195.1,325 199.2,327.7 202.6,321.6 206,324.3 208.7,333.2 212.1,330.5 215.5,331.8 218.2,328.4 222.3,332.5 226.3,328.4 230.4,324.3 234.5,325 238.5,321.6 244,319.6 248,313.5 252.1,317.6 254.8,331.1 257.5,330.5 258.9,333.2 260.5,329.8" fill="none" stroke="#e4e23a" stroke-width="1.3" stroke-linejoin="round" />
<rect x="8.6" y="475" width="1" height="11.2" fill="#2a7fae" />
<rect x="10.7" y="475.8" width="1" height="10.4" fill="#2a7fae" />
<rect x="12.9" y="476.1" width="1" height="10.1" fill="#2a7fae" />
<rect x="15" y="476.5" width="1" height="9.7" fill="#2a7fae" />
<rect x="17.1" y="474.3" width="1" height="11.9" fill="#2a7fae" />
<rect x="19.2" y="472.4" width="1" height="13.8" fill="#2a7fae" />
<rect x="21.3" y="471.2" width="1" height="15" fill="#2a7fae" />
<rect x="23.5" y="472.1" width="1" height="14.1" fill="#2a7fae" />
<rect x="25.6" y="475.3" width="1" height="10.9" fill="#2a7fae" />
<rect x="27.7" y="479.7" width="1" height="6.5" fill="#2a7fae" />
<rect x="31.9" y="486.2" width="1" height="8.3" fill="#2a7fae" />
<rect x="34.1" y="486.2" width="1" height="11.5" fill="#2a7fae" />
<rect x="36.2" y="486.2" width="1" height="12.5" fill="#2a7fae" />
<rect x="38.3" y="486.2" width="1" height="13.3" fill="#2a7fae" />
<rect x="40.4" y="486.2" width="1" height="14.2" fill="#2a7fae" />
<rect x="42.5" y="486.2" width="1" height="15.3" fill="#2a7fae" />
<rect x="44.7" y="486.2" width="1" height="14.5" fill="#2a7fae" />
<rect x="46.8" y="486.2" width="1" height="12.8" fill="#2a7fae" />
<rect x="48.9" y="486.2" width="1" height="10.8" fill="#2a7fae" />
<rect x="51" y="486.2" width="1" height="8.7" fill="#2a7fae" />
<rect x="53.1" y="486.2" width="1" height="6.7" fill="#2a7fae" />
<rect x="55.3" y="486.2" width="1" height="5" fill="#2a7fae" />
<rect x="57.4" y="486.2" width="1" height="3.5" fill="#2a7fae" />
<rect x="59.5" y="486.2" width="1" height="2.8" fill="#2a7fae" />
<rect x="61.6" y="486.2" width="1" height="2" fill="#2a7fae" />
<rect x="63.7" y="486.2" width="1" height="0.7" fill="#2a7fae" />
<rect x="65.9" y="485.3" width="1" height="0.9" fill="#2a7fae" />
<rect x="68" y="484" width="1" height="2.2" fill="#2a7fae" />
<rect x="70.1" y="484" width="1" height="2.2" fill="#2a7fae" />
<rect x="72.2" y="484" width="1" height="2.2" fill="#2a7fae" />
<rect x="74.3" y="485.4" width="1" height="0.8" fill="#2a7fae" />
<rect x="78.6" y="486.2" width="1" height="0.9" fill="#2a7fae" />
<rect x="80.7" y="486.2" width="1" height="1.6" fill="#2a7fae" />
<rect x="82.8" y="486.2" width="1" height="3.2" fill="#2a7fae" />
<rect x="84.9" y="486.2" width="1" height="3.9" fill="#2a7fae" />
<rect x="87.1" y="486.2" width="1" height="4.6" fill="#2a7fae" />
<rect x="89.2" y="486.2" width="1" height="5.2" fill="#2a7fae" />
<rect x="91.3" y="486.2" width="1" height="5.8" fill="#2a7fae" />
<rect x="93.4" y="486.2" width="1" height="4.7" fill="#2a7fae" />
<rect x="95.5" y="486.2" width="1" height="3" fill="#2a7fae" />
<rect x="97.7" y="486.2" width="1" height="1.9" fill="#2a7fae" />
<rect x="99.8" y="486.2" width="1" height="0.9" fill="#2a7fae" />
<rect x="101.9" y="486.2" width="1" height="0.6" fill="#2a7fae" />
<rect x="104" y="486.2" width="1" height="0.5" fill="#2a7fae" />
<rect x="106.1" y="486.2" width="1" height="0.4" fill="#2a7fae" />
<rect x="114.6" y="485.5" width="1" height="0.7" fill="#2a7fae" />
<rect x="116.7" y="483.4" width="1" height="2.8" fill="#2a7fae" />
<rect x="118.9" y="480.9" width="1" height="5.3" fill="#2a7fae" />
<rect x="121" y="477.1" width="1" height="9.1" fill="#2a7fae" />
<rect x="123.1" y="472.9" width="1" height="13.3" fill="#2a7fae" />
<rect x="125.2" y="469.5" width="1" height="16.7" fill="#2a7fae" />
<rect x="127.3" y="466.7" width="1" height="19.5" fill="#2a7fae" />
<rect x="129.5" y="464.2" width="1" height="22" fill="#2a7fae" />
<rect x="131.6" y="461.6" width="1" height="24.6" fill="#2a7fae" />
<rect x="133.7" y="458.9" width="1" height="27.3" fill="#2a7fae" />
<rect x="135.8" y="458.1" width="1" height="28.1" fill="#2a7fae" />
<rect x="137.9" y="458.8" width="1" height="27.4" fill="#2a7fae" />
<rect x="140.1" y="461.2" width="1" height="25" fill="#2a7fae" />
<rect x="142.2" y="468.6" width="1" height="17.6" fill="#2a7fae" />
<rect x="144.3" y="471.7" width="1" height="14.5" fill="#2a7fae" />
<rect x="146.4" y="472.4" width="1" height="13.8" fill="#2a7fae" />
<rect x="148.5" y="472.6" width="1" height="13.6" fill="#2a7fae" />
<rect x="150.7" y="472.2" width="1" height="14" fill="#2a7fae" />
<rect x="152.8" y="472.8" width="1" height="13.4" fill="#2a7fae" />
<rect x="154.9" y="474.5" width="1" height="11.7" fill="#2a7fae" />
<rect x="157" y="476" width="1" height="10.2" fill="#2a7fae" />
<rect x="159.1" y="476.7" width="1" height="9.5" fill="#2a7fae" />
<rect x="161.3" y="477.7" width="1" height="8.5" fill="#2a7fae" />
<rect x="163.4" y="480.2" width="1" height="6" fill="#2a7fae" />
<rect x="165.5" y="482.6" width="1" height="3.6" fill="#2a7fae" />
<rect x="167.6" y="484" width="1" height="2.2" fill="#2a7fae" />
<rect x="169.7" y="485.4" width="1" height="0.8" fill="#2a7fae" />
<rect x="174" y="486.2" width="1" height="1.6" fill="#2a7fae" />
<rect x="176.1" y="486.2" width="1" height="3.2" fill="#2a7fae" />
<rect x="178.2" y="486.2" width="1" height="4.6" fill="#2a7fae" />
<rect x="180.3" y="486.2" width="1" height="6" fill="#2a7fae" />
<rect x="182.5" y="486.2" width="1" height="7.1" fill="#2a7fae" />
<rect x="184.6" y="486.2" width="1" height="8.1" fill="#2a7fae" />
<rect x="186.7" y="486.2" width="1" height="9.7" fill="#2a7fae" />
<rect x="188.8" y="486.2" width="1" height="9.6" fill="#2a7fae" />
<rect x="190.9" y="486.2" width="1" height="7.3" fill="#2a7fae" />
<rect x="195.2" y="481" width="1" height="5.2" fill="#2a7fae" />
<rect x="197.3" y="479.4" width="1" height="6.8" fill="#2a7fae" />
<rect x="199.4" y="479.4" width="1" height="6.8" fill="#2a7fae" />
<rect x="201.5" y="480.7" width="1" height="5.5" fill="#2a7fae" />
<rect x="203.7" y="483.4" width="1" height="2.8" fill="#2a7fae" />
<rect x="205.8" y="485.6" width="1" height="0.6" fill="#2a7fae" />
<rect x="207.9" y="486.2" width="1" height="1.5" fill="#2a7fae" />
<rect x="210" y="486.2" width="1" height="2.4" fill="#2a7fae" />
<rect x="212.1" y="486.2" width="1" height="2.7" fill="#2a7fae" />
<rect x="214.3" y="486.2" width="1" height="2.9" fill="#2a7fae" />
<rect x="216.4" y="486.2" width="1" height="3" fill="#2a7fae" />
<rect x="218.5" y="486.2" width="1" height="3" fill="#2a7fae" />
<rect x="220.6" y="486.2" width="1" height="3" fill="#2a7fae" />
<rect x="222.7" y="486.2" width="1" height="2.2" fill="#2a7fae" />
<rect x="224.9" y="486.2" width="1" height="1.5" fill="#2a7fae" />
<rect x="227" y="486.2" width="1" height="0.7" fill="#2a7fae" />
<rect x="231.2" y="483.7" width="1" height="2.5" fill="#2a7fae" />
<rect x="233.3" y="482.5" width="1" height="3.7" fill="#2a7fae" />
<rect x="235.5" y="482.5" width="1" height="3.7" fill="#2a7fae" />
<rect x="237.6" y="482.5" width="1" height="3.7" fill="#2a7fae" />
<rect x="239.7" y="482.5" width="1" height="3.7" fill="#2a7fae" />
<rect x="241.8" y="482.2" width="1" height="4" fill="#2a7fae" />
<rect x="243.9" y="482" width="1" height="4.2" fill="#2a7fae" />
<rect x="246.1" y="481.7" width="1" height="4.5" fill="#2a7fae" />
<rect x="248.2" y="481.3" width="1" height="4.9" fill="#2a7fae" />
<rect x="250.3" y="481" width="1" height="5.2" fill="#2a7fae" />
<rect x="252.4" y="482.5" width="1" height="3.7" fill="#2a7fae" />
<rect x="254.5" y="485.5" width="1" height="0.7" fill="#2a7fae" />
<rect x="256.7" y="486.2" width="1" height="2.6" fill="#2a7fae" />
<rect x="258.8" y="486.2" width="1" height="5.3" fill="#2a7fae" />
<line x1="6" y1="486.2" x2="378.5" y2="486.2" stroke="#2f86b4" stroke-width="1"/>
<polyline points="6.5,499.6 12.5,484.7 18.4,469.8 23.7,460.8 27.4,465.3 31.9,480.2 36.3,495.1 42.3,511.6 48.3,522.8 52.8,519 56.5,514.6 61.7,516.8 67.7,513.8 72.2,510.8 76.6,513.1 82.6,516 88.6,523.5 93.1,527.2 97.5,523.5 102,524.3 106.5,523.5 112.5,525.7 118.4,520.5 122.9,505.6 127.4,487.7 130.1,481.7 130,481.7 134.5,459.3 139,445.1 143.4,447.4 146.4,444.4 152.4,434 156.9,434.7 162.1,431.7 165.8,434 171.8,438.4 177.8,445.9 183.7,456.3 189,463.1 192.7,453.4 197.2,444.4 201.6,442.2 206.1,447.4 210.6,449.6 216.6,454.1 222.5,454.9 228.5,453.4 234.5,448.1 240.4,445.9 246.4,441.4 251.6,439.2 255.4,442.9 259.1,452.6" fill="none" stroke="#b01c28" stroke-width="1.0" stroke-linejoin="round" />
<polyline points="6.5,499.6 12.5,490.7 19.9,478.7 27.4,471.3 31.9,474.3 37.8,484.7 43.8,498.1 49.8,507.1 55.7,512.3 61.7,514.6 67.7,514.3 73.7,512.3 82.6,514.6 88.6,518.3 96,522 103.5,523.1 112.5,523.5 118.4,522.8 122.9,516 127.4,505.6 130.1,502.6 130,502.6 134.5,483.2 139,468.3 144.9,457.8 152.4,447.4 159.9,440.7 165.8,437.7 173.3,438.4 180.7,444.4 186.7,450.4 191.9,454.9 197.2,450.4 203.1,447.4 210.6,448.9 216.6,450.4 222.5,452.6 228.5,452.6 234.5,450.4 240.4,448.1 246.4,445.1 253.1,442.9 256.9,445.1 260.6,447.4" fill="none" stroke="#dcc0c0" stroke-width="1.1" stroke-linejoin="round" />
<polyline points="6.8,645.5 12.1,627.9 14.7,607.6 18.2,618.2 20.9,613.8 23.5,615.6 26.2,632.3 29.7,626.1 33.2,641.1 36.4,635 39.4,650.8 42.9,672 46.4,663.2 49.1,680.8 51.7,663.2 55.3,660.5 59.7,674.6 64.1,665.8 67.6,671.1 71.1,679.9 74.7,693.1 76.9,697.6 79.9,685.2 82.6,686.1 87.9,666.7 92.3,679.9 96.7,661.4 101.1,662.3 102.9,661.4 106.4,671.1 107.3,669.3 109.9,684.3 115.2,661.4 117.9,675.5 120.5,658.8 122.3,657.9 126.7,642 130,633.2 133.5,619.1 137.9,605 141.5,616.4 145,619.1 146.8,601.5 150.3,597.9 153.8,590.9 156.5,595.3 160,588.2 164.4,582.1 167,582.9 170.6,594.4 173.2,584.7 176.7,610.3 179.4,616.4 182,614.7 184.7,626.1 187.3,645.5 190.8,627.9 194.4,605 197.9,597 200.5,610.3 204.1,629.7 206.7,631.4 208.5,636.7 211.1,620.8 213.8,631.4 216.4,635 219.9,627.9 225.2,620.8 227.9,624.4 230.5,610.3 234,612.9 238.4,607.6 241.4,596.2 243.7,609.4 245.5,608.5 248.1,623.5 250.8,620.8 254.3,628.8 257,625.3 259.6,624.4" fill="none" stroke="#b81f28" stroke-width="1.0" stroke-linejoin="round" />
<polyline points="670,209 690,204.8 715.5,200 734.5,193 753.5,187.3 772.5,181.6 791.5,176.8 808,173.6 819,172.1 838,168.3 857,164.1 876,159.7 895,155 914,150.2 940,143.6 949,144.1 968,140.3 987,137.1 1006,134.6 1025,132.7 1044,131.4 1063,130.5 1070,129.9 1079,129.9 1098,130.3 1123.6,130.8" fill="none" stroke="#1f5e7e" stroke-width="1.2" stroke-linejoin="round" />
<polyline points="670.8,192 683.2,181.6 690.8,170.2 696.5,162.6 704.1,161.3 717.4,162.6 730.7,165.4 747.8,167.3 766.8,169.2 782,167.3 797.2,165.4 808,164.5 815.2,164.5 820.9,160.7 828.5,151.2 836.1,148.9 847.5,151.2 857,151.6 866.5,149.7 876,147.8 891.2,147.8 906.4,148.9 915.9,149.3 925.4,155 933,162.6 940,167.3 949,170.7 958.5,175.5 968,181.2 979.4,188.8 992.7,193.5 1006,196.4 1021.2,198.3 1036.4,198.9 1047.8,198.3 1059.2,196.4 1070,195.4 1079,193.5 1098,193.2 1113.2,192.2 1123.6,191.6" fill="none" stroke="#2f8c86" stroke-width="1.2" stroke-linejoin="round" />
<polyline points="670.8,165.4 683.2,156.9 692.7,149.3 698.4,146.4 711.7,145.5 730.7,145.5 753.5,144.5 772.5,143.6 791.5,140.7 808,140.4 815.2,139.8 822.8,135 830.4,130.3 841.8,129.9 849.4,132.2 862.7,131.2 876,129.3 891.2,129.3 906.4,130.3 917.8,133.1 929.2,137.9 940,143.6 941.4,144.1 954.7,147.9 968,155.5 979.4,161.2 992.7,166 1006,169.8 1021.2,171.7 1036.4,172.6 1053.5,173.2 1070,173.2 1079,172.6 1098,172.1 1123.6,171.3" fill="none" stroke="#6f8d8b" stroke-width="1.2" stroke-linejoin="round" />
<polyline points="670.8,139.8 687,133.1 697.4,131.2 711.7,128.4 725,126.5 738.3,123.6 753.5,120.8 768.7,118.9 783.9,116 797.2,115.1 808,115.1 815.2,115.1 820.9,113.2 826.6,111.3 847.5,111.3 862.7,111.7 870.3,111.3 885.5,110.9 902.6,110.9 914,112.8 923.5,117 933,120.8 940,124.6 941.4,124.2 954.7,128.9 968,134.6 981.3,139.4 994.6,143.2 1006,145.1 1021.2,146 1036.4,147 1051.6,148.9 1070,150.8 1079,151.2 1098,151.2 1123.6,150.8" fill="none" stroke="#c9bcbc" stroke-width="1.25" stroke-linejoin="round" />
<polyline points="670.8,113.8 687,113.2 697.4,114.1 711.7,111.3 723.1,107.5 734.5,100.8 747.8,98 763,94.2 778.2,92.3 797.2,89.4 808,89.4 819,89.4 830.4,92.3 847.5,92.7 870.3,91.9 885.5,92.3 902.6,93.2 914,95.1 929.2,98.9 940,102.2 949,106.1 968,111.8 987,117.5 1006,120.4 1023.1,121.3 1036.4,123.2 1047.8,125.1 1063,127 1070,128 1079,129.5 1098,130.3 1123.6,130.8" fill="none" stroke="#c39a9a" stroke-width="1.15" stroke-linejoin="round" />
<polyline points="670.8,88.1 683.2,90.4 697.4,98 711.7,95.1 719.3,92.3 726.9,86.6 740.2,78 753.5,72.3 766.8,67.6 782,66.6 808,64.7 819,65.7 828.5,71.4 836.1,74.2 849.4,72.9 870.3,71.4 885.5,72.9 902.6,73.7 914,75.6 929.2,79 940,81.3 949,83.4 962.3,87.2 975.6,90 992.7,91.9 1009.8,92.8 1023.1,93.8 1032.6,95.7 1044,100.4 1053.5,104.2 1063,107.1 1069.5,108.4 1079,109 1088.5,109.9 1101.8,109.9 1113.2,109 1123.6,109" fill="none" stroke="#a3182c" stroke-width="1.2" stroke-linejoin="round" />
<rect x="675.1" y="119.8" width="1" height="21.8" fill="#f0f0f0" />
<rect x="673.7" y="127.3" width="3.8" height="4.9" fill="#1818c8" stroke="#f0f0f8" stroke-width="0.9"/>
<rect x="682.3" y="111.3" width="1" height="21.8" fill="#f0f0f0" />
<rect x="680.5" y="112.8" width="4.6" height="19.9" fill="#f2f2f2" />
<rect x="689.9" y="111.7" width="1" height="27.2" fill="#f0f0f0" />
<rect x="688.5" y="114.5" width="3.8" height="11.9" fill="#1818c8" stroke="#f0f0f8" stroke-width="0.9"/>
<rect x="696.9" y="119.8" width="1" height="37" fill="#f0f0f0" />
<rect x="695.5" y="125.9" width="3.8" height="10.6" fill="#1818c8" stroke="#f0f0f8" stroke-width="0.9"/>
<rect x="704.5" y="103.7" width="1" height="33.2" fill="#f0f0f0" />
<rect x="702.7" y="109" width="4.6" height="27.9" fill="#f2f2f2" />
<rect x="711.6" y="101.8" width="1" height="17.1" fill="#f0f0f0" />
<rect x="710.2" y="109.8" width="3.8" height="6.2" fill="#1818c8" stroke="#f0f0f8" stroke-width="0.9"/>
<rect x="718.8" y="96.1" width="1" height="21.8" fill="#f0f0f0" />
<rect x="717" y="101.2" width="4.6" height="15.8" fill="#f2f2f2" />
<rect x="726" y="88.5" width="1" height="14.2" fill="#f0f0f0" />
<rect x="724.2" y="89.4" width="4.6" height="12.7" fill="#f2f2f2" />
<rect x="733" y="70.4" width="1" height="19.9" fill="#f0f0f0" />
<rect x="731.2" y="77.1" width="4.6" height="12" fill="#f2f2f2" />
<rect x="740.3" y="76.1" width="1" height="19" fill="#f0f0f0" />
<rect x="738.9" y="77.9" width="3.8" height="8.7" fill="#1818c8" stroke="#f0f0f8" stroke-width="0.9"/>
<rect x="747.7" y="79.9" width="1" height="24.1" fill="#f0f0f0" />
<rect x="746.3" y="87" width="3.8" height="10.2" fill="#1818c8" stroke="#f0f0f8" stroke-width="0.9"/>
<rect x="754.9" y="84.7" width="1" height="13.3" fill="#f0f0f0" />
<rect x="753.1" y="87.2" width="4.6" height="10.3" fill="#f2f2f2" />
<rect x="761.9" y="81.8" width="1" height="8.5" fill="#f0f0f0" />
<rect x="760.1" y="86.6" width="4.6" height="1.9" fill="#f2f2f2" />
<rect x="769.5" y="82.8" width="1" height="12.3" fill="#f0f0f0" />
<rect x="768.1" y="87" width="3.8" height="4.1" fill="#1818c8" stroke="#f0f0f8" stroke-width="0.9"/>
<rect x="776.7" y="86.6" width="1" height="26.6" fill="#f0f0f0" />
<rect x="775.3" y="92.3" width="3.8" height="16.7" fill="#1818c8" stroke="#f0f0f8" stroke-width="0.9"/>
<rect x="784" y="98.9" width="1" height="22.8" fill="#f0f0f0" />
<rect x="782.2" y="102.2" width="4.6" height="7.6" fill="#f2f2f2" />
<rect x="791" y="101.8" width="1" height="13.3" fill="#f0f0f0" />
<rect x="789.2" y="103.3" width="4.6" height="1.2" fill="#f2f2f2" />
<rect x="798" y="98" width="1" height="15.2" fill="#f0f0f0" />
<rect x="796.2" y="104.1" width="4.6" height="1.5" fill="#f2f2f2" />
<rect x="805.2" y="102.7" width="1" height="27.5" fill="#f0f0f0" />
<rect x="803.8" y="106.6" width="3.8" height="19.5" fill="#1818c8" stroke="#f0f0f8" stroke-width="0.9"/>
<rect x="812.4" y="110.3" width="1" height="19" fill="#f0f0f0" />
<rect x="810.6" y="113.2" width="4.6" height="13.3" fill="#f2f2f2" />
<rect x="819.8" y="112.2" width="1" height="19" fill="#f0f0f0" />
<rect x="818.4" y="114.5" width="3.8" height="10.6" fill="#1818c8" stroke="#f0f0f8" stroke-width="0.9"/>
<rect x="827" y="118.9" width="1" height="11.4" fill="#f0f0f0" />
<rect x="825.2" y="124.2" width="4.6" height="1.2" fill="#f2f2f2" />
<rect x="834.3" y="122.7" width="1" height="23.7" fill="#f0f0f0" />
<rect x="832.9" y="125.6" width="3.8" height="12.5" fill="#1818c8" stroke="#f0f0f8" stroke-width="0.9"/>
<rect x="841.7" y="139.8" width="1" height="8.5" fill="#f0f0f0" />
<rect x="839.9" y="142.1" width="4.6" height="2.1" fill="#f2f2f2" />
<rect x="848.9" y="144.5" width="1" height="18" fill="#f0f0f0" />
<rect x="847.5" y="144.9" width="3.8" height="3.9" fill="#1818c8" stroke="#f0f0f8" stroke-width="0.9"/>
<rect x="855.9" y="124.6" width="1" height="25.6" fill="#f0f0f0" />
<rect x="854.1" y="129.3" width="4.6" height="20.3" fill="#f2f2f2" />
<rect x="863.1" y="109.8" width="1" height="29.1" fill="#f0f0f0" />
<rect x="861.3" y="114.1" width="4.6" height="17.1" fill="#f2f2f2" />
<rect x="870.4" y="99.9" width="1" height="16.1" fill="#f0f0f0" />
<rect x="868.6" y="104.1" width="4.6" height="10.6" fill="#f2f2f2" />
<rect x="878" y="99.9" width="1" height="13.3" fill="#f0f0f0" />
<rect x="876.6" y="105" width="3.8" height="4.9" fill="#1818c8" stroke="#f0f0f8" stroke-width="0.9"/>
<rect x="885" y="106.5" width="1" height="8.5" fill="#f0f0f0" />
<rect x="883.2" y="109.4" width="4.6" height="2.8" fill="#f2f2f2" />
<rect x="892.2" y="107.5" width="1" height="18" fill="#f0f0f0" />
<rect x="890.8" y="112.6" width="3.8" height="8.7" fill="#1818c8" stroke="#f0f0f8" stroke-width="0.9"/>
<rect x="899.2" y="97" width="1" height="23.7" fill="#f0f0f0" />
<rect x="897.4" y="107.1" width="4.6" height="13.7" fill="#f2f2f2" />
<rect x="906.5" y="100.8" width="1" height="19" fill="#f0f0f0" />
<rect x="905.1" y="107.9" width="3.8" height="10.2" fill="#1818c8" stroke="#f0f0f8" stroke-width="0.9"/>
<rect x="913.9" y="112.2" width="1" height="24.7" fill="#f0f0f0" />
<rect x="912.5" y="114.5" width="3.8" height="19.5" fill="#1818c8" stroke="#f0f0f8" stroke-width="0.9"/>
<rect x="921.1" y="127.4" width="1" height="26.6" fill="#f0f0f0" />
<rect x="919.7" y="133.5" width="3.8" height="15" fill="#1818c8" stroke="#f0f0f8" stroke-width="0.9"/>
<rect x="928.1" y="145.5" width="1" height="23.7" fill="#f0f0f0" />
<rect x="926.7" y="149.7" width="3.8" height="18.6" fill="#1818c8" stroke="#f0f0f8" stroke-width="0.9"/>
<rect x="935.3" y="158.8" width="1" height="11.4" fill="#f0f0f0" />
<rect x="933.5" y="160.1" width="4.6" height="7.6" fill="#f2f2f2" />
<rect x="942.8" y="153.6" width="1" height="22.8" fill="#f0f0f0" />
<rect x="941.4" y="159.7" width="3.8" height="10.6" fill="#1818c8" stroke="#f0f0f8" stroke-width="0.9"/>
<rect x="950" y="149.8" width="1" height="29.4" fill="#f0f0f0" />
<rect x="948.2" y="151.2" width="4.6" height="20.5" fill="#f2f2f2" />
<rect x="957.2" y="145.1" width="1" height="12.3" fill="#f0f0f0" />
<rect x="955.8" y="151.6" width="3.8" height="4.5" fill="#1818c8" stroke="#f0f0f8" stroke-width="0.9"/>
<rect x="964.5" y="154.6" width="1" height="21.8" fill="#f0f0f0" />
<rect x="963.1" y="157.3" width="3.8" height="17.8" fill="#1818c8" stroke="#f0f0f8" stroke-width="0.9"/>
<rect x="971.7" y="168.8" width="1" height="19.9" fill="#f0f0f0" />
<rect x="970.3" y="174.6" width="3.8" height="8.1" fill="#1818c8" stroke="#f0f0f8" stroke-width="0.9"/>
<rect x="978.9" y="173.6" width="1" height="17.1" fill="#f0f0f0" />
<rect x="977.1" y="174.2" width="4.6" height="8" fill="#f2f2f2" />
<rect x="985.9" y="169.8" width="1" height="11.4" fill="#f0f0f0" />
<rect x="984.1" y="174.2" width="4.6" height="2.8" fill="#f2f2f2" />
<rect x="993.1" y="170.7" width="1" height="9.5" fill="#f0f0f0" />
<rect x="991.3" y="172.1" width="4.6" height="3.8" fill="#f2f2f2" />
<rect x="1000.4" y="165" width="1" height="12.3" fill="#f0f0f0" />
<rect x="998.6" y="168.3" width="4.6" height="4.4" fill="#f2f2f2" />
<rect x="1008" y="136.5" width="1" height="31.3" fill="#f0f0f0" />
<rect x="1006.2" y="144.7" width="4.6" height="23.2" fill="#f2f2f2" />
<rect x="1015" y="140.9" width="1" height="30.8" fill="#f0f0f0" />
<rect x="1013.6" y="144.2" width="3.8" height="24.3" fill="#1818c8" stroke="#f0f0f8" stroke-width="0.9"/>
<rect x="1022.2" y="144.1" width="1" height="36.1" fill="#f0f0f0" />
<rect x="1020.4" y="145.1" width="4.6" height="23.7" fill="#f2f2f2" />
<rect x="1029.6" y="147" width="1" height="20.9" fill="#f0f0f0" />
<rect x="1028.2" y="148.3" width="3.8" height="11.5" fill="#1818c8" stroke="#f0f0f8" stroke-width="0.9"/>
<rect x="1036.6" y="149.8" width="1" height="17.1" fill="#f0f0f0" />
<rect x="1034.8" y="156.9" width="4.6" height="4" fill="#f2f2f2" />
<rect x="1043.9" y="140.9" width="1" height="17.5" fill="#f0f0f0" />
<rect x="1042.1" y="145.1" width="4.6" height="11.8" fill="#f2f2f2" />
<rect x="1051.1" y="111.8" width="1" height="36.1" fill="#f0f0f0" />
<rect x="1049.3" y="113.2" width="4.6" height="34.8" fill="#f2f2f2" />
<rect x="1058.1" y="111.8" width="1" height="9.5" fill="#f0f0f0" />
<rect x="1056.3" y="116.2" width="4.6" height="1.2" fill="#f2f2f2" />
<rect x="1065.3" y="116.6" width="1" height="19.9" fill="#f0f0f0" />
<rect x="1063.9" y="117.9" width="3.8" height="16.3" fill="#1818c8" stroke="#f0f0f8" stroke-width="0.9"/>
<rect x="1072.8" y="118.5" width="1" height="20.9" fill="#f0f0f0" />
<rect x="1071" y="122.3" width="4.6" height="12.3" fill="#f2f2f2" />
<rect x="1080" y="116.6" width="1" height="19" fill="#f0f0f0" />
<rect x="1078.6" y="123.6" width="3.8" height="6.8" fill="#1818c8" stroke="#f0f0f8" stroke-width="0.9"/>
<rect x="1087.2" y="118.5" width="1" height="14.2" fill="#f0f0f0" />
<rect x="1085.4" y="118.9" width="4.6" height="10.6" fill="#f2f2f2" />
<rect x="1094.5" y="115.6" width="1" height="13.3" fill="#f0f0f0" />
<rect x="1093.1" y="119.8" width="3.8" height="6.8" fill="#1818c8" stroke="#f0f0f8" stroke-width="0.9"/>
<rect x="1101.7" y="127" width="1" height="27.5" fill="#f0f0f0" />
<rect x="1100.3" y="127.8" width="3.8" height="21.6" fill="#1818c8" stroke="#f0f0f8" stroke-width="0.9"/>
<rect x="1108.9" y="145.1" width="1" height="19" fill="#f0f0f0" />
<rect x="1107.5" y="150.8" width="3.8" height="10.6" fill="#1818c8" stroke="#f0f0f8" stroke-width="0.9"/>
<rect x="1115.9" y="146" width="1" height="16.1" fill="#f0f0f0" />
<rect x="1114.1" y="148.5" width="4.6" height="12.7" fill="#f2f2f2" />
<rect x="1123.1" y="137.5" width="1" height="18" fill="#f0f0f0" />
<rect x="1121.7" y="149.3" width="3.8" height="2.6" fill="#1818c8" stroke="#f0f0f8" stroke-width="0.9"/>
<polyline points="670.7,344.5 683.3,337.7 690.5,342.7 697.7,345.4 704,332.5 712.1,335.5 725.6,331.9 733.7,330.1 748.1,315.3 754.4,317 761.6,321.1 770.6,328.3 784.1,336.8 792.2,330.1 798.5,326.5 805.7,346.3 812.9,338.2 820.1,349 826.4,356.2 834.5,367.9 840.8,367.4 848.1,365.8 855.3,360.7 864.3,349.9 870.6,344.5 879.6,340 885.9,342.2 892.2,346.7 899.4,340.4 900,340 907.2,336.4 914.4,347.2 920.7,348.5 927.9,354.4 935.1,347.2 943.2,348.5 950.4,340 957.6,350.8 963.9,359.8 972.9,367.6 980.1,361.6 986.4,362.5 993.6,359.3 1000.8,363.4 1008,349.6 1015.2,351.7 1022.4,338.8 1029.6,336.4 1036.8,338.8 1044,331.9 1051.2,327.8 1058.4,326.5 1065.6,326.5 1073.7,320.2 1081,325.6 1087.3,322.4 1094.5,326.5 1101.7,333.7 1109.8,344.5 1116.1,333.7 1123.3,340.9" fill="none" stroke="#2b7030" stroke-width="1.1" stroke-linejoin="round" />
<rect x="673.9" y="502.3" width="4" height="15.2" fill="#2b88b9" />
<rect x="681" y="502.3" width="4" height="9.2" fill="#2b88b9" />
<rect x="688.4" y="502.3" width="4" height="8.4" fill="#2b88b9" />
<rect x="695.7" y="502.3" width="4" height="9.7" fill="#2b88b9" />
<rect x="702.8" y="502.3" width="4" height="5.5" fill="#2b88b9" />
<rect x="710" y="502.3" width="4" height="4.2" fill="#2b88b9" />
<rect x="724.3" y="498.7" width="4" height="3.6" fill="#2b88b9" />
<rect x="731.6" y="494.3" width="4" height="8" fill="#2b88b9" />
<rect x="738.9" y="494.3" width="4" height="8" fill="#2b88b9" />
<rect x="746.1" y="497.4" width="4" height="4.9" fill="#2b88b9" />
<rect x="753.4" y="498.3" width="4" height="4" fill="#2b88b9" />
<rect x="760.5" y="499.2" width="4" height="3.1" fill="#2b88b9" />
<rect x="767.9" y="501.4" width="4" height="0.9" fill="#2b88b9" />
<rect x="775" y="502.3" width="4" height="4.2" fill="#2b88b9" />
<rect x="782.3" y="502.3" width="4" height="6.6" fill="#2b88b9" />
<rect x="789.7" y="502.3" width="4" height="8.3" fill="#2b88b9" />
<rect x="796.8" y="502.3" width="4" height="9.7" fill="#2b88b9" />
<rect x="804" y="502.3" width="4" height="14.3" fill="#2b88b9" />
<rect x="811.3" y="502.3" width="4" height="14.7" fill="#2b88b9" />
<rect x="818.4" y="502.3" width="4" height="16.7" fill="#2b88b9" />
<rect x="825.8" y="502.3" width="4" height="17.4" fill="#2b88b9" />
<rect x="832.9" y="502.3" width="4" height="19.4" fill="#2b88b9" />
<rect x="840.1" y="502.3" width="4" height="21.6" fill="#2b88b9" />
<rect x="847.4" y="502.3" width="4" height="22.6" fill="#2b88b9" />
<rect x="854.5" y="502.3" width="4" height="18.3" fill="#2b88b9" />
<rect x="861.9" y="502.3" width="4" height="12.5" fill="#2b88b9" />
<rect x="869" y="502.3" width="4" height="5.5" fill="#2b88b9" />
<rect x="876.3" y="502.3" width="4" height="2.9" fill="#2b88b9" />
<rect x="883.5" y="502.3" width="4" height="0.6" fill="#2b88b9" />
<rect x="890.8" y="502.3" width="4" height="1.1" fill="#2b88b9" />
<rect x="898" y="502" width="4" height="0.3" fill="#2b88b9" />
<rect x="912.3" y="502.3" width="4" height="3.3" fill="#2b88b9" />
<rect x="919.4" y="502.3" width="4" height="7.9" fill="#2b88b9" />
<rect x="926.8" y="502.3" width="4" height="15.2" fill="#2b88b9" />
<rect x="933.9" y="502.3" width="4" height="17.1" fill="#2b88b9" />
<rect x="941.2" y="502.3" width="4" height="18.9" fill="#2b88b9" />
<rect x="948.4" y="502.3" width="4" height="14.3" fill="#2b88b9" />
<rect x="955.7" y="502.3" width="4" height="13.4" fill="#2b88b9" />
<rect x="962.9" y="502.3" width="4" height="14.7" fill="#2b88b9" />
<rect x="970.2" y="502.3" width="4" height="16.1" fill="#2b88b9" />
<rect x="977.3" y="502.3" width="4" height="14.3" fill="#2b88b9" />
<rect x="984.7" y="502.3" width="4" height="12.1" fill="#2b88b9" />
<rect x="991.8" y="502.3" width="4" height="9.7" fill="#2b88b9" />
<rect x="999.1" y="502.3" width="4" height="6.6" fill="#2b88b9" />
<rect x="1013.4" y="501.6" width="4" height="0.7" fill="#2b88b9" />
<rect x="1020.8" y="497.4" width="4" height="4.9" fill="#2b88b9" />
<rect x="1027.9" y="497.4" width="4" height="4.9" fill="#2b88b9" />
<rect x="1035.2" y="496.5" width="4" height="5.8" fill="#2b88b9" />
<rect x="1042.4" y="493.7" width="4" height="8.6" fill="#2b88b9" />
<rect x="1049.7" y="486.4" width="4" height="15.9" fill="#2b88b9" />
<rect x="1056.8" y="483.3" width="4" height="19" fill="#2b88b9" />
<rect x="1064.2" y="485.1" width="4" height="17.2" fill="#2b88b9" />
<rect x="1071.3" y="484.5" width="4" height="17.8" fill="#2b88b9" />
<rect x="1078.5" y="487.3" width="4" height="15" fill="#2b88b9" />
<rect x="1085.8" y="487.3" width="4" height="15" fill="#2b88b9" />
<rect x="1092.9" y="489.1" width="4" height="13.2" fill="#2b88b9" />
<rect x="1100.3" y="496.1" width="4" height="6.2" fill="#2b88b9" />
<rect x="1107.4" y="502" width="4" height="0.3" fill="#2b88b9" />
<rect x="1114.7" y="502.3" width="4" height="1.8" fill="#2b88b9" />
<rect x="1121.9" y="502.3" width="4" height="3.3" fill="#2b88b9" />
<line x1="670" y1="502.3" x2="1211.5" y2="502.3" stroke="#2f86b4" stroke-width="1"/>
<polyline points="670.7,466.2 675.3,467.5 683.6,463.5 690,464.9 697.3,468.6 704.6,464.4 713.8,463.8 721.1,458.9 728.5,453.4 735.8,447.4 741.3,446.1 748.6,448.5 755.9,447 763.3,447 770.6,449.7 777.9,455.2 787.1,460.7 798.1,467.1 807.2,476.3 816.4,482.7 825.6,490 834.7,497.4 842.1,504.7 848.5,510.2 854.9,511.1 862.2,509.6 869.5,504.7 876.9,501 884.2,498.7 891.5,499.2 898.9,497.9 900,498.3 911,499.8 918.3,505.6 927.5,518.4 936.6,527.6 944,532.2 951.3,532.7 958.6,534 966,540.4 973.3,544.5 982.4,545.9 991.6,546.8 998.9,545 1006.3,540.4 1015.4,534.9 1024.6,530.3 1031.9,528 1039.2,525.8 1046.6,518.4 1052.1,509.3 1057.6,502 1064.9,498.3 1074.1,494.6 1083.2,491.9 1090.5,487.3 1096,488.2 1101.5,491.9 1108.9,498.7 1116.2,499.2 1123.5,501" fill="none" stroke="#b01c28" stroke-width="1.0" stroke-linejoin="round" />
<polyline points="670.7,449.7 677.2,452.8 686.3,455.2 695.5,458 704.6,460.4 713.8,460.7 723,459.8 732.1,457.4 741.3,455.2 750.4,453.4 759.6,451.6 768.8,451.6 777.9,452.5 787.1,454.3 796.3,457.6 805.4,461.6 814.6,466.2 823.7,471.7 832.9,477.8 842.1,483.6 851.2,490 860.4,495 869.5,498.3 878.7,498.7 887.9,499.2 898.9,498.3 900,497.9 911,499.2 918.3,501 927.5,505.6 936.6,511.1 945.8,515.7 955,520.3 964.1,524.9 973.3,529.1 982.4,533.1 991.6,536.8 998.9,538.2 1006.3,538.6 1015.4,538.2 1024.6,535.8 1031.9,534.4 1039.2,533.1 1046.6,530.3 1055.7,524.9 1064.9,518.4 1074.1,513.9 1083.2,508.4 1090.5,503.8 1097.9,500.5 1105.2,499.2 1116.2,499.2 1123.5,500.1" fill="none" stroke="#dcc0c0" stroke-width="1.1" stroke-linejoin="round" />
<polyline points="670.7,586.9 675.7,599.7 683.6,592.8 690.9,592.8 697.3,612.6 704.6,616.8 712.5,629.6 719.3,629.2 726.6,613.5 733.6,602.5 741.3,618.1 748.2,633.6 755.9,615.3 763.3,619 770.6,628.1 777.6,637.3 784.9,617.5 792.6,622.6 799,629 806.3,644.3 813.7,639.1 820.1,622.6 827.4,604.3 834.7,628.1 842.1,641.9 849.4,655.6 856.7,639.5 863.7,641.9 870.5,625.4 878.3,623.6 885.1,641 892.4,643.2 899.2,644.4 900,644.6 907.3,660.2 914.3,679.1 921.4,684 928.8,689.5 935.9,690.8 943.2,695.9 950.4,682.2 957.7,672.5 964.9,689.5 972.2,694.1 979.3,686.8 986.7,674.3 993.8,680.9 1001.1,668.8 1008.3,654.7 1015.4,661.1 1022.8,642.4 1029.9,649.2 1037.2,658.4 1044.4,662.6 1051.7,647.9 1058.8,644.6 1066.2,657.1 1073.3,641.9 1080.5,656.2 1087.8,641 1094.9,636.4 1102.3,641.3 1109.4,636.4 1116.7,631.8 1123.9,629.6" fill="none" stroke="#b81f28" stroke-width="1.0" stroke-linejoin="round" />
<rect x="6" y="262" width="541.5" height="2.1" fill="#fff" />
<rect x="670" y="262.9" width="541.5" height="2.3" fill="#fff" />
<rect x="6" y="413.1" width="372.5" height="1.3" fill="#fff" />
<rect x="6" y="563.9" width="372.5" height="1.3" fill="#fff" />
<rect x="670" y="413.9" width="541.5" height="1.3" fill="#fff" />
<rect x="670" y="563.9" width="541.5" height="1.3" fill="#fff" />
<text x="375.5" y="43.6" fill="#fff" font-size="10.7" text-anchor="end" >10800.00</text>
<text x="375.5" y="82.3" fill="#fff" font-size="10.7" text-anchor="end" >9900.00</text>
<text x="375.5" y="121" fill="#fff" font-size="10.7" text-anchor="end" >9000.00</text>
<text x="375.5" y="159.7" fill="#fff" font-size="10.7" text-anchor="end" >8100.00</text>
<text x="375.5" y="198.4" fill="#fff" font-size="10.7" text-anchor="end" >7200.00</text>
<text x="375.5" y="237.1" fill="#fff" font-size="10.7" text-anchor="end" >6300.00</text>
<text x="375.5" y="280.5" fill="#fff" font-size="10.7" text-anchor="end" >100</text>
<text x="375.5" y="309" fill="#fff" font-size="10.7" text-anchor="end" >75</text>
<text x="375.5" y="337.5" fill="#fff" font-size="10.7" text-anchor="end" >50</text>
<text x="375.5" y="366.5" fill="#fff" font-size="10.7" text-anchor="end" >25</text>
<text x="375.5" y="395.1" fill="#fff" font-size="10.7" text-anchor="end" >0</text>
<text x="375.5" y="431.7" fill="#fff" font-size="10.7" text-anchor="end" >300.00</text>
<text x="375.5" y="449.5" fill="#fff" font-size="10.7" text-anchor="end" >200.00</text>
<text x="375.5" y="467.4" fill="#fff" font-size="10.7" text-anchor="end" >100.00</text>
<text x="375.5" y="485.2" fill="#fff" font-size="10.7" text-anchor="end" >0.00</text>
<text x="375.5" y="503" fill="#fff" font-size="10.7" text-anchor="end" >-100.00</text>
<text x="375.5" y="520.9" fill="#fff" font-size="10.7" text-anchor="end" >-200.00</text>
<text x="375.5" y="538.7" fill="#fff" font-size="10.7" text-anchor="end" >-300.00</text>
<text x="375.5" y="556.5" fill="#fff" font-size="10.7" text-anchor="end" >-400.00</text>
<text x="375.5" y="572.7" fill="#fff" font-size="10.7" text-anchor="end" >2000.00</text>
<text x="375.5" y="590.7" fill="#fff" font-size="10.7" text-anchor="end" >1500.00</text>
<text x="375.5" y="608.7" fill="#fff" font-size="10.7" text-anchor="end" >1000.00</text>
<text x="375.5" y="626.7" fill="#fff" font-size="10.7" text-anchor="end" >500.00</text>
<text x="375.5" y="644.7" fill="#fff" font-size="10.7" text-anchor="end" >0.00</text>
<text x="375.5" y="662.7" fill="#fff" font-size="10.7" text-anchor="end" >-500.00</text>
<text x="375.5" y="680.7" fill="#fff" font-size="10.7" text-anchor="end" >-1000.00</text>
<text x="375.5" y="698.7" fill="#fff" font-size="10.7" text-anchor="end" >-1500.00</text>
<text x="375.5" y="716.7" fill="#fff" font-size="10.7" text-anchor="end" >-2000.00</text>
<text x="1208" y="29.1" fill="#fff" font-size="10.7" text-anchor="end" >104.00</text>
<text x="1208" y="60.7" fill="#fff" font-size="10.7" text-anchor="end" >102.00</text>
<text x="1208" y="92.3" fill="#fff" font-size="10.7" text-anchor="end" >100.00</text>
<text x="1208" y="123.9" fill="#fff" font-size="10.7" text-anchor="end" >98.00</text>
<text x="1208" y="155.5" fill="#fff" font-size="10.7" text-anchor="end" >96.00</text>
<text x="1208" y="187.1" fill="#fff" font-size="10.7" text-anchor="end" >94.00</text>
<text x="1208" y="218.7" fill="#fff" font-size="10.7" text-anchor="end" >92.00</text>
<text x="1208" y="250.3" fill="#fff" font-size="10.7" text-anchor="end" >90.00</text>
<text x="1208" y="281.5" fill="#fff" font-size="10.7" text-anchor="end" >100</text>
<text x="1208" y="310" fill="#fff" font-size="10.7" text-anchor="end" >75</text>
<text x="1208" y="338.5" fill="#fff" font-size="10.7" text-anchor="end" >50</text>
<text x="1208" y="367.5" fill="#fff" font-size="10.7" text-anchor="end" >25</text>
<text x="1208" y="396.1" fill="#fff" font-size="10.7" text-anchor="end" >0</text>
<text x="1208" y="425.5" fill="#fff" font-size="10.7" text-anchor="end" >1.60</text>
<text x="1208" y="444.5" fill="#fff" font-size="10.7" text-anchor="end" >1.20</text>
<text x="1208" y="463.6" fill="#fff" font-size="10.7" text-anchor="end" >0.80</text>
<text x="1208" y="482.6" fill="#fff" font-size="10.7" text-anchor="end" >0.40</text>
<text x="1208" y="501.7" fill="#fff" font-size="10.7" text-anchor="end" >0.00</text>
<text x="1208" y="520.7" fill="#fff" font-size="10.7" text-anchor="end" >-0.40</text>
<text x="1208" y="539.7" fill="#fff" font-size="10.7" text-anchor="end" >-0.80</text>
<text x="1208" y="558.8" fill="#fff" font-size="10.7" text-anchor="end" >-1.20</text>
<text x="1208" y="575.7" fill="#fff" font-size="10.7" text-anchor="end" >6.00</text>
<text x="1208" y="586.4" fill="#fff" font-size="10.7" text-anchor="end" >5.00</text>
<text x="1208" y="597.2" fill="#fff" font-size="10.7" text-anchor="end" >4.00</text>
<text x="1208" y="607.9" fill="#fff" font-size="10.7" text-anchor="end" >3.00</text>
<text x="1208" y="618.6" fill="#fff" font-size="10.7" text-anchor="end" >2.00</text>
<text x="1208" y="629.4" fill="#fff" font-size="10.7" text-anchor="end" >1.00</text>
<text x="1208" y="640.1" fill="#fff" font-size="10.7" text-anchor="end" >0.00</text>
<text x="1208" y="650.8" fill="#fff" font-size="10.7" text-anchor="end" >-1.00</text>
<text x="1208" y="661.5" fill="#fff" font-size="10.7" text-anchor="end" >-2.00</text>
<text x="1208" y="672.3" fill="#fff" font-size="10.7" text-anchor="end" >-3.00</text>
<text x="1208" y="683" fill="#fff" font-size="10.7" text-anchor="end" >-4.00</text>
<text x="1208" y="693.7" fill="#fff" font-size="10.7" text-anchor="end" >-5.00</text>
<text x="1208" y="704.5" fill="#fff" font-size="10.7" text-anchor="end" >-6.00</text>
<text x="1208" y="715.2" fill="#fff" font-size="10.7" text-anchor="end" >-7.00</text>
<text x="17.2" y="260" fill="#fff" font-size="10.7" text-anchor="middle" >1月</text>
<text x="58.4" y="260" fill="#fff" font-size="10.7" text-anchor="middle" >2</text>
<text x="99.5" y="260" fill="#fff" font-size="10.7" text-anchor="middle" >3</text>
<text x="145.3" y="260" fill="#fff" font-size="10.7" text-anchor="middle" >4</text>
<text x="190.3" y="260" fill="#fff" font-size="10.7" text-anchor="middle" >5</text>
<text x="229.5" y="260" fill="#fff" font-size="10.7" text-anchor="middle" >6</text>
<text x="711.1" y="260.6" fill="#fff" font-size="10.7" text-anchor="middle" >4月</text>
<text x="870" y="260.6" fill="#fff" font-size="10.7" text-anchor="middle" >5</text>
<text x="1021.4" y="260.6" fill="#fff" font-size="10.7" text-anchor="middle" >6</text>
<text x="11" y="39" fill="#fff" font-size="10" text-anchor="start" >ボリンジャーバンド</text>
<text x="11.6" y="277.9" fill="#fff" font-size="9.5" text-anchor="start" letter-spacing="0.9">RSI</text>
<text x="11.6" y="428.4" fill="#fff" font-size="9.5" text-anchor="start" letter-spacing="0.6">MACD</text>
<text x="11" y="580" fill="#fff" font-size="10.2" text-anchor="start" >モメンタム</text>
<text x="675" y="39" fill="#fff" font-size="10" text-anchor="start" >ボリンジャーバンド</text>
<text x="675.6" y="278.9" fill="#fff" font-size="9.5" text-anchor="start" letter-spacing="0.9">RSI</text>
<text x="675.6" y="429.2" fill="#fff" font-size="9.5" text-anchor="start" letter-spacing="0.6">MACD</text>
<text x="675" y="580" fill="#fff" font-size="10.2" text-anchor="start" >モメンタム</text>
<text x="383" y="39" fill="#fff" font-size="10" text-anchor="start" >価格帯出来高(100)</text>
<text x="380" y="260" fill="#fff" font-size="10" text-anchor="start" >(十億株)</text>
<text x="428" y="260" fill="#fff" font-size="10.7" text-anchor="start" >8</text>
<text x="475" y="260" fill="#fff" font-size="10.7" text-anchor="start" >16</text>
<text x="523" y="260" fill="#fff" font-size="10.7" text-anchor="start" >24</text>
<text x="22" y="92" fill="#fff" font-size="10.7" text-anchor="start" >01/07</text>
<text x="22" y="107" fill="#fff" font-size="10.7" text-anchor="start" >9325.35</text>
<text x="47" y="192" fill="#fff" font-size="10.7" text-anchor="start" >01/26</text>
<text x="47" y="207" fill="#fff" font-size="10.7" text-anchor="start" >7671.04</text>
<text x="112" y="220" fill="#fff" font-size="10.7" text-anchor="start" >03/10</text>
<text x="112" y="235" fill="#fff" font-size="10.7" text-anchor="start" >7021.28</text>
<text x="160" y="103" fill="#fff" font-size="10.7" text-anchor="start" >04/10</text>
<text x="160" y="118" fill="#fff" font-size="10.7" text-anchor="start" >9068.80</text>
<text x="186" y="158" fill="#fff" font-size="10.7" text-anchor="start" >04/28</text>
<text x="186" y="173" fill="#fff" font-size="10.7" text-anchor="start" >8493.77</text>
<text x="197" y="85" fill="#fff" font-size="10.7" text-anchor="start" >05/11</text>
<text x="197" y="100" fill="#fff" font-size="10.7" text-anchor="start" >9503.91</text>
<text x="249" y="56" fill="#fff" font-size="10.7" text-anchor="start" >06/12</text>
<text x="249" y="71" fill="#fff" font-size="10.7" text-anchor="start" >10170.82</text>
<text x="732" y="54" fill="#fff" font-size="10.7" text-anchor="start" >04/06</text>
<text x="732" y="69" fill="#fff" font-size="10.7" text-anchor="start" >101.44</text>
<text x="849" y="177" fill="#fff" font-size="10.7" text-anchor="start" >04/28</text>
<text x="849" y="192" fill="#fff" font-size="10.7" text-anchor="start" >95.62</text>
<text x="898" y="82" fill="#fff" font-size="10.7" text-anchor="start" >05/07</text>
<text x="898" y="97" fill="#fff" font-size="10.7" text-anchor="start" >99.73</text>
<text x="978" y="205" fill="#fff" font-size="10.7" text-anchor="start" >05/22</text>
<text x="978" y="220" fill="#fff" font-size="10.7" text-anchor="start" >93.85</text>
<text x="1050" y="95" fill="#fff" font-size="10.7" text-anchor="start" >06/05</text>
<text x="1050" y="110" fill="#fff" font-size="10.7" text-anchor="start" >98.89</text>
<text x="1108" y="179" fill="#fff" font-size="10.7" text-anchor="start" >06/17</text>
<text x="1108" y="194" fill="#fff" font-size="10.7" text-anchor="start" >95.49</text>
<polygon points="262.5,87 267,84 267,90" fill="#bf6b69"/>
<text x="315" y="75.5" fill="#bf6b69" font-size="10.7" text-anchor="end" >9786.26</text>
<text x="315" y="91.5" fill="#bf6b69" font-size="10.7" text-anchor="end" >+82.54</text>
<text x="315" y="106" fill="#bf6b69" font-size="10.7" text-anchor="end" >51762870</text>
<polygon points="268,332.7 272.5,329.7 272.5,335.7" fill="#2f8a3a"/>
<text x="277" y="336.5" fill="#2f8a3a" font-size="10.7" text-anchor="start" >53.69</text>
<polygon points="268,446.5 272.5,443.5 272.5,449.5" fill="#e8d8d8"/>
<text x="277" y="450.3" fill="#e8d8d8" font-size="10.7" text-anchor="start" >216.33</text>
<polygon points="268,625.2 272.5,622.2 272.5,628.2" fill="#c0232b"/>
<text x="277" y="629" fill="#c0232b" font-size="10.7" text-anchor="start" >521.24</text>
<polygon points="1131,151.2 1136,147.8 1136,154.6" fill="#f4f4f4"/>
<text x="1135.5" y="148" fill="#c8605e" font-size="10.7" text-anchor="start" >96.25</text>
<text x="1135.5" y="162" fill="#4a5ec8" font-size="10.7" text-anchor="start" >96.23</text>
<polygon points="1132.5,340 1137,337 1137,343" fill="#2f8a3a"/>
<text x="1141" y="343.7" fill="#2f8a3a" font-size="10.7" text-anchor="start" >48.06</text>
<polygon points="1132.5,499 1137,496 1137,502" fill="#e8c8c8"/>
<text x="1141" y="502.8" fill="#e8d0d0" font-size="10.7" text-anchor="start" >0.05</text>
<polygon points="1132.5,628 1137,625 1137,631" fill="#c0232b"/>
<text x="1141" y="631.8" fill="#c0232b" font-size="10.7" text-anchor="start" >1.10</text>
</svg>
<div class="bar" style="left:3.2px;width:544.5px"></div>
<div class="strip" style="left:4.2px;width:543.5px"></div>
<div class="tab act" style="left:7.2px;width:93px"><span>チャート</span></div>
<div class="tab" style="left:100.8px;width:67.5px"><span>歩値</span></div>
<div class="tab" style="left:169.5px;width:67px"><span>設定</span></div>
<svg style="position:absolute;left:531.7px;top:5px" width="13" height="9" viewBox="0 0 13 9"><polygon points="0.5,0.8 6,4.3 0.5,7.8" fill="#dfe8fa"/><polygon points="6.5,0.8 12,4.3 6.5,7.8" fill="#dfe8fa"/></svg>
<div style="position:absolute;left:547px;top:1px;width:1.4px;height:15px;background:#e8eefc"></div>
<div class="bar" style="left:667.6px;width:544.5px"></div>
<div class="strip" style="left:668.6px;width:543.5px"></div>
<div class="tab act" style="left:671.6px;width:93px"><span>チャート</span></div>
<div class="tab" style="left:765.2px;width:67.5px"><span>歩値</span></div>
<div class="tab" style="left:833.9px;width:67px"><span>設定</span></div>
<svg style="position:absolute;left:1196.1px;top:5px" width="13" height="9" viewBox="0 0 13 9"><polygon points="0.5,0.8 6,4.3 0.5,7.8" fill="#dfe8fa"/><polygon points="6.5,0.8 12,4.3 6.5,7.8" fill="#dfe8fa"/></svg>
<div style="position:absolute;left:1211.4px;top:1px;width:1.4px;height:15px;background:#e8eefc"></div>
<div class="side" style="left:550px;width:115px">
<div class="dd" style="left:1.3px;top:1.2px;width:113.7px;height:19px"><span class="ddt">日経平均</span><span class="ddb" style="width:18px"><i></i></span></div>
<div class="dd" style="left:1.3px;top:22.1px;width:70.3px;height:19.8px"><span class="ddt" style="top:1.6px">日足</span><span class="ddb" style="width:18.6px"><i></i></span></div>
<div class="ib" style="left:2px;top:45px"><svg width="22" height="22" viewBox="0 0 22 22"><polygon points="3,20.3 4.6,15.2 18.2,1.6 21.6,5 8,18.6" fill="#62b81a"/><polygon points="3,20.3 4.6,15.2 8,18.6" fill="#ead9a6"/><polygon points="5.6,14.2 18.2,1.6 19.6,3 7,15.6" fill="#93dc44"/></svg></div>
<div class="ib" style="left:30px;top:45px"><svg width="22" height="22" viewBox="0 0 22 22"><polygon points="8.4,9.8 18.1,4.9 22,11.4 12.8,17.5" fill="#1a78dc"/><polygon points="8.4,9.8 18.1,4.9 19.4,7.2 9.8,12.2" fill="#4aa6f4"/><polygon points="2.7,12.7 8.4,9.8 12.8,17.5 8.4,20" fill="#f6f6f6"/><polygon points="8.4,20 12.8,17.5 13.2,18.8 8.9,21.2" fill="#c8c8d0"/></svg></div>
<div class="ib" style="left:58px;top:45px"><svg width="22" height="22" viewBox="0 0 22 22"><circle cx="10" cy="7" r="4.2" fill="#7a7a7a" opacity=".8"/><line x1="12.5" y1="10" x2="19" y2="19" stroke="#5c5c5c" stroke-width="2"/><line x1="0" y1="0" x2="22" y2="22" stroke="#000" stroke-width="1.6"/></svg></div>
<div class="ib" style="left:2px;top:72px"><svg width="22" height="22" viewBox="0 0 22 22"><rect x="9.4" y="1.5" width="3.2" height="19" rx="1" fill="#f4b41a" transform="rotate(0 11 11)"/><rect x="9.4" y="1.5" width="3.2" height="19" rx="1" fill="#f4b41a" transform="rotate(45 11 11)"/><rect x="9.4" y="1.5" width="3.2" height="19" rx="1" fill="#f4b41a" transform="rotate(90 11 11)"/><rect x="9.4" y="1.5" width="3.2" height="19" rx="1" fill="#f4b41a" transform="rotate(135 11 11)"/><circle cx="11" cy="11" r="7" fill="#f7b818"/><circle cx="11" cy="9.6" r="5.4" fill="#fbd04a" opacity=".55"/><circle cx="11" cy="11" r="3" fill="#3a3a40"/></svg></div>
<div class="ib" style="left:30px;top:72px"><svg width="22" height="22" viewBox="0 0 22 22"><rect x="4" y="6" width="16" height="12" fill="#7b7b7b"/><rect x="4" y="6" width="16" height="2.2" fill="#5a6a8a"/><rect x="6.5" y="10" width="11" height="6" fill="#5c5c5c"/><line x1="0" y1="0" x2="22" y2="22" stroke="#000" stroke-width="1.6"/></svg></div>
<div class="ib" style="left:58px;top:72px"><svg width="22" height="22" viewBox="0 0 22 22"><rect x="7.5" y="3" width="7" height="4" fill="#f6f6f6"/><rect x="4" y="7" width="14" height="6.5" rx="1.5" fill="#e4e4e4"/><rect x="5.5" y="8.6" width="11" height="1.8" fill="#222"/><rect x="7.5" y="13.5" width="7" height="5" fill="#dcdcdc"/><rect x="9" y="15" width="4" height="2.2" fill="#555"/></svg></div>
<div class="row" style="top:101.8px"><span class="l" style="">08/12/22<span class="til">～</span> 09/06/19</span><span class="v" style=""></span></div>
<div class="row" style="top:118.8px"><span class="l" style="">日付</span><span class="v" style="">09/06/19</span></div>
<div class="row" style="top:134.8px"><span class="l" style="">始値</span><span class="v" style="">9757.85</span></div>
<div class="row" style="top:150.9px"><span class="l" style="">高値</span><span class="v" style="">9822.83</span></div>
<div class="row" style="top:166.9px"><span class="l" style="">安値</span><span class="v" style="">9703.87</span></div>
<div class="row" style="top:182.9px"><span class="l" style="">現値</span><span class="v" style="color:#f2f23c;">9786.26</span></div>
<div class="row" style="top:198.9px"><span class="l" style="">前日比</span><span class="v" style="">+82.54</span></div>
<div class="row" style="top:215px"><span class="l" style="text-decoration:underline;text-decoration-color:#b02030;text-decoration-thickness:1px;text-underline-offset:0.4px;text-decoration-skip-ink:none;color:#f0d0d0;">MA(25,C)</span><span class="v" style="">9627.17</span></div>
<div class="row" style="top:231px"><span class="l" style="text-decoration:underline;text-decoration-color:#2a86b8;text-decoration-thickness:1px;text-underline-offset:0.4px;text-decoration-skip-ink:none;color:#d4e6f4;">MA(75,C)</span><span class="v" style="">8828.11</span></div>
<div class="row" style="top:247px"><span class="l" style="text-decoration:underline;text-decoration-color:#b02030;text-decoration-thickness:1px;text-underline-offset:0.4px;text-decoration-skip-ink:none;color:#f0d0d0;">+2.0σ</span><span class="v" style="">10203.60</span></div>
<div class="row" style="top:263.1px"><span class="l" style="text-decoration:underline;text-decoration-color:#e8dede;text-decoration-thickness:1px;text-underline-offset:0.4px;text-decoration-skip-ink:none;">+1.0σ</span><span class="v" style="">9915.38</span></div>
<div class="row" style="top:279.1px"><span class="l" style="text-decoration:underline;text-decoration-color:#e8e4e4;text-decoration-thickness:1px;text-underline-offset:0.4px;text-decoration-skip-ink:none;">MA(25,C)</span><span class="v" style="">9627.17</span></div>
<div class="row" style="top:295.1px"><span class="l" style="text-decoration:underline;text-decoration-color:#9ab0b0;text-decoration-thickness:1px;text-underline-offset:0.4px;text-decoration-skip-ink:none;">-1.0σ</span><span class="v" style="">9338.95</span></div>
<div class="row" style="top:311.2px"><span class="l" style="text-decoration:underline;text-decoration-color:#2f8c86;text-decoration-thickness:1px;text-underline-offset:0.4px;text-decoration-skip-ink:none;">-2.0σ</span><span class="v" style="">9050.74</span></div>
<div class="row" style="top:327.2px"><span class="l" style="text-decoration:underline;text-decoration-color:#2f8a3a;text-decoration-thickness:1px;text-underline-offset:0.4px;text-decoration-skip-ink:none;color:#d8ecd8;">RSI(14)</span><span class="v" style="">53.69</span></div>
<div class="row" style="top:343.2px"><span class="l" style="text-decoration:underline;text-decoration-color:#e4e23a;text-decoration-thickness:1px;text-underline-offset:0.4px;text-decoration-skip-ink:none;">RSI(28)</span><span class="v" style="">57.85</span></div>
<div class="row" style="top:359.2px"><span class="l" style="text-decoration:underline;text-decoration-color:#b02030;text-decoration-thickness:1px;text-underline-offset:0.4px;text-decoration-skip-ink:none;color:#f0d0d0;">MACD(12-26,C)</span><span class="v" style=""></span></div>
<div class="row" style="top:375.3px"><span class="l" style=""></span><span class="v" style="">178.60</span></div>
<div class="row" style="top:391.3px"><span class="l" style="text-decoration:underline;text-decoration-color:#f0e4e4;text-decoration-thickness:1px;text-underline-offset:0.4px;text-decoration-skip-ink:none;">SIG(9)</span><span class="v" style="">216.33</span></div>
<div class="row" style="top:407.3px"><span class="l" style="text-decoration:underline;text-decoration-color:#2a86b8;text-decoration-thickness:1px;text-underline-offset:0.4px;text-decoration-skip-ink:none;color:#d4e6f4;">MACDH(1.0)</span><span class="v" style="">-37.73</span></div>
<div class="row" style="top:423.4px"><span class="l" style="text-decoration:underline;text-decoration-color:#b02030;text-decoration-thickness:1px;text-underline-offset:0.4px;text-decoration-skip-ink:none;color:#f0d0d0;"><span class="hk">ﾓﾒﾝﾀﾑ</span>(25)</span><span class="v" style="">521.24</span></div>
<div class="row" style="top:439.4px"><span class="l" style="text-decoration:underline;text-decoration-color:#f0f0f0;text-decoration-thickness:1px;text-underline-offset:0.4px;text-decoration-skip-ink:none;text-underline-offset:1.7px;">価格帯</span><span class="v" style=""></span></div>
<div class="row" style="top:455.4px"><span class="l" style="text-decoration:underline;text-decoration-color:#f0f0f0;text-decoration-thickness:1px;text-underline-offset:0.4px;text-decoration-skip-ink:none;text-underline-offset:1.7px;">価格帯</span><span class="v" style=""></span></div>
<div class="row" style="top:471.5px"><span class="l" style="text-decoration:underline;text-decoration-color:#f0f0f0;text-decoration-thickness:1px;text-underline-offset:0.4px;text-decoration-skip-ink:none;text-underline-offset:1.7px;">出来高</span><span class="v" style=""></span></div>
</div>
<div class="side" style="left:1214px;width:115px">
<div class="dd" style="left:1.3px;top:1.2px;width:113.7px;height:19px"><span class="ddt">米ドル・円</span><span class="ddb" style="width:18px"><i></i></span></div>
<div class="dd" style="left:1.3px;top:22.1px;width:70.3px;height:19.8px"><span class="ddt" style="top:1.6px">日足</span><span class="ddb" style="width:18.6px"><i></i></span></div>
<div class="ib" style="left:2px;top:45px"><svg width="22" height="22" viewBox="0 0 22 22"><polygon points="3,20.3 4.6,15.2 18.2,1.6 21.6,5 8,18.6" fill="#62b81a"/><polygon points="3,20.3 4.6,15.2 8,18.6" fill="#ead9a6"/><polygon points="5.6,14.2 18.2,1.6 19.6,3 7,15.6" fill="#93dc44"/></svg></div>
<div class="ib" style="left:30px;top:45px"><svg width="22" height="22" viewBox="0 0 22 22"><polygon points="8.4,9.8 18.1,4.9 22,11.4 12.8,17.5" fill="#1a78dc"/><polygon points="8.4,9.8 18.1,4.9 19.4,7.2 9.8,12.2" fill="#4aa6f4"/><polygon points="2.7,12.7 8.4,9.8 12.8,17.5 8.4,20" fill="#f6f6f6"/><polygon points="8.4,20 12.8,17.5 13.2,18.8 8.9,21.2" fill="#c8c8d0"/></svg></div>
<div class="ib" style="left:58px;top:45px"><svg width="22" height="22" viewBox="0 0 22 22"><circle cx="10" cy="7" r="4.2" fill="#7a7a7a" opacity=".8"/><line x1="12.5" y1="10" x2="19" y2="19" stroke="#5c5c5c" stroke-width="2"/><line x1="0" y1="0" x2="22" y2="22" stroke="#000" stroke-width="1.6"/></svg></div>
<div class="ib" style="left:2px;top:72px"><svg width="22" height="22" viewBox="0 0 22 22"><rect x="9.4" y="1.5" width="3.2" height="19" rx="1" fill="#f4b41a" transform="rotate(0 11 11)"/><rect x="9.4" y="1.5" width="3.2" height="19" rx="1" fill="#f4b41a" transform="rotate(45 11 11)"/><rect x="9.4" y="1.5" width="3.2" height="19" rx="1" fill="#f4b41a" transform="rotate(90 11 11)"/><rect x="9.4" y="1.5" width="3.2" height="19" rx="1" fill="#f4b41a" transform="rotate(135 11 11)"/><circle cx="11" cy="11" r="7" fill="#f7b818"/><circle cx="11" cy="9.6" r="5.4" fill="#fbd04a" opacity=".55"/><circle cx="11" cy="11" r="3" fill="#3a3a40"/></svg></div>
<div class="ib" style="left:30px;top:72px"><svg width="22" height="22" viewBox="0 0 22 22"><rect x="4" y="6" width="16" height="12" fill="#7b7b7b"/><rect x="4" y="6" width="16" height="2.2" fill="#5a6a8a"/><rect x="6.5" y="10" width="11" height="6" fill="#5c5c5c"/><line x1="0" y1="0" x2="22" y2="22" stroke="#000" stroke-width="1.6"/></svg></div>
<div class="ib" style="left:58px;top:72px"><svg width="22" height="22" viewBox="0 0 22 22"><rect x="7.5" y="3" width="7" height="4" fill="#f6f6f6"/><rect x="4" y="7" width="14" height="6.5" rx="1.5" fill="#e4e4e4"/><rect x="5.5" y="8.6" width="11" height="1.8" fill="#222"/><rect x="7.5" y="13.5" width="7" height="5" fill="#dcdcdc"/><rect x="9" y="15" width="4" height="2.2" fill="#555"/></svg></div>
<div class="row" style="top:101.8px"><span class="l" style="">09/03/24<span class="til">～</span> 09/06/19</span><span class="v" style=""></span></div>
<div class="row" style="top:118.8px"><span class="l" style="">日付</span><span class="v" style="">09/06/19</span></div>
<div class="row" style="top:134.8px"><span class="l" style="">始値</span><span class="v" style="">96.48</span></div>
<div class="row" style="top:150.9px"><span class="l" style="">高値</span><span class="v" style="">97.18</span></div>
<div class="row" style="top:166.9px"><span class="l" style="">安値</span><span class="v" style="">95.99</span></div>
<div class="row" style="top:182.9px"><span class="l" style="">現値</span><span class="v" style="color:#f2f23c;">96.23</span></div>
<div class="row" style="top:198.9px"><span class="l" style="">前日比</span><span class="v" style="">-0.27</span></div>
<div class="row" style="top:215px"><span class="l" style="text-decoration:underline;text-decoration-color:#b02030;text-decoration-thickness:1px;text-underline-offset:0.4px;text-decoration-skip-ink:none;color:#f0d0d0;">MA(25,C)</span><span class="v" style="">96.39</span></div>
<div class="row" style="top:231px"><span class="l" style="text-decoration:underline;text-decoration-color:#2a86b8;text-decoration-thickness:1px;text-underline-offset:0.4px;text-decoration-skip-ink:none;color:#d4e6f4;">MA(75,C)</span><span class="v" style="">97.56</span></div>
<div class="row" style="top:247px"><span class="l" style="text-decoration:underline;text-decoration-color:#b02030;text-decoration-thickness:1px;text-underline-offset:0.4px;text-decoration-skip-ink:none;color:#f0d0d0;">+2.0σ</span><span class="v" style="">98.94</span></div>
<div class="row" style="top:263.1px"><span class="l" style="text-decoration:underline;text-decoration-color:#e8dede;text-decoration-thickness:1px;text-underline-offset:0.4px;text-decoration-skip-ink:none;">+1.0σ</span><span class="v" style="">97.66</span></div>
<div class="row" style="top:279.1px"><span class="l" style="text-decoration:underline;text-decoration-color:#e8e4e4;text-decoration-thickness:1px;text-underline-offset:0.4px;text-decoration-skip-ink:none;">MA(25,C)</span><span class="v" style="">96.39</span></div>
<div class="row" style="top:295.1px"><span class="l" style="text-decoration:underline;text-decoration-color:#9ab0b0;text-decoration-thickness:1px;text-underline-offset:0.4px;text-decoration-skip-ink:none;">-1.0σ</span><span class="v" style="">95.11</span></div>
<div class="row" style="top:311.2px"><span class="l" style="text-decoration:underline;text-decoration-color:#2f8c86;text-decoration-thickness:1px;text-underline-offset:0.4px;text-decoration-skip-ink:none;">-2.0σ</span><span class="v" style="">93.83</span></div>
<div class="row" style="top:327.2px"><span class="l" style="text-decoration:underline;text-decoration-color:#2f8a3a;text-decoration-thickness:1px;text-underline-offset:0.4px;text-decoration-skip-ink:none;color:#d8ecd8;">RSI(14)</span><span class="v" style="">48.06</span></div>
<div class="row" style="top:343.2px"><span class="l" style="text-decoration:underline;text-decoration-color:#b02030;text-decoration-thickness:1px;text-underline-offset:0.4px;text-decoration-skip-ink:none;color:#f0d0d0;">MACD(12-26,C)</span><span class="v" style=""></span></div>
<div class="row" style="top:359.2px"><span class="l" style=""></span><span class="v" style="">-0.02</span></div>
<div class="row" style="top:375.3px"><span class="l" style="text-decoration:underline;text-decoration-color:#f0e4e4;text-decoration-thickness:1px;text-underline-offset:0.4px;text-decoration-skip-ink:none;">SIG(9)</span><span class="v" style="">0.05</span></div>
<div class="row" style="top:391.3px"><span class="l" style="text-decoration:underline;text-decoration-color:#2a86b8;text-decoration-thickness:1px;text-underline-offset:0.4px;text-decoration-skip-ink:none;color:#d4e6f4;">MACDH(1.0)</span><span class="v" style="">-0.07</span></div>
<div class="row" style="top:407.3px"><span class="l" style="text-decoration:underline;text-decoration-color:#b02030;text-decoration-thickness:1px;text-underline-offset:0.4px;text-decoration-skip-ink:none;color:#f0d0d0;"><span class="hk">ﾓﾒﾝﾀﾑ</span>(25)</span><span class="v" style="">1.10</span></div>
</div>
<div class="edge" style="left:1329px;width:2.6px;background:#000"></div>
<div class="edge" style="left:1331.6px;width:1.4px;background:#0c1d44"></div>
<div class="sb" style="left:6px;width:541.5px;top:714.9px">
<div class="sbb" style="left:1.5px"><i class="al"></i></div>
<div class="sbb" style="right:1px"><i class="ar"></i></div>
<div class="sbt" style="left:507.2px"><b></b><b></b><b></b></div>
</div>
<div class="bs" style="left:7px;width:540.5px;top:730px"></div>
<div style="position:absolute;left:14.7px;top:733.6px;width:155.9px;height:6px;background:linear-gradient(#7f8ea6,#e6effd 30%,#cfe0fa 70%,#a9bcd8);border-radius:1px"></div>
<div style="position:absolute;left:170.9px;top:729.6px;width:11.7px;height:9px;background:#fafbfd"></div>
<div style="position:absolute;left:183.6px;top:732px;width:354px;height:6px;background:linear-gradient(#2a2c2f,#9aa2ab 25%,#a4acb4 45%,#3a3b3d 62%,#38393b)"></div>
<div class="sb" style="left:670px;width:541.5px;top:713.9px">
<div class="sbb" style="left:1.5px"><i class="al"></i></div>
<div class="sbb" style="right:1px"><i class="ar"></i></div>
<div class="sbt" style="left:507.2px"><b></b><b></b><b></b></div>
</div>
<div class="bs" style="left:671px;width:540.5px;top:729px"></div>
<div style="position:absolute;left:678.5px;top:732.6px;width:234.4px;height:6px;background:linear-gradient(#7f8ea6,#e6effd 30%,#cfe0fa 70%,#a9bcd8);border-radius:1px"></div>
<div style="position:absolute;left:913.6px;top:728.6px;width:13.6px;height:9px;background:#fafbfd"></div>
<div style="position:absolute;left:928.2px;top:731px;width:273.3px;height:6px;background:linear-gradient(#2a2c2f,#9aa2ab 25%,#a4acb4 45%,#3a3b3d 62%,#38393b)"></div>
</div>
</body></html>
